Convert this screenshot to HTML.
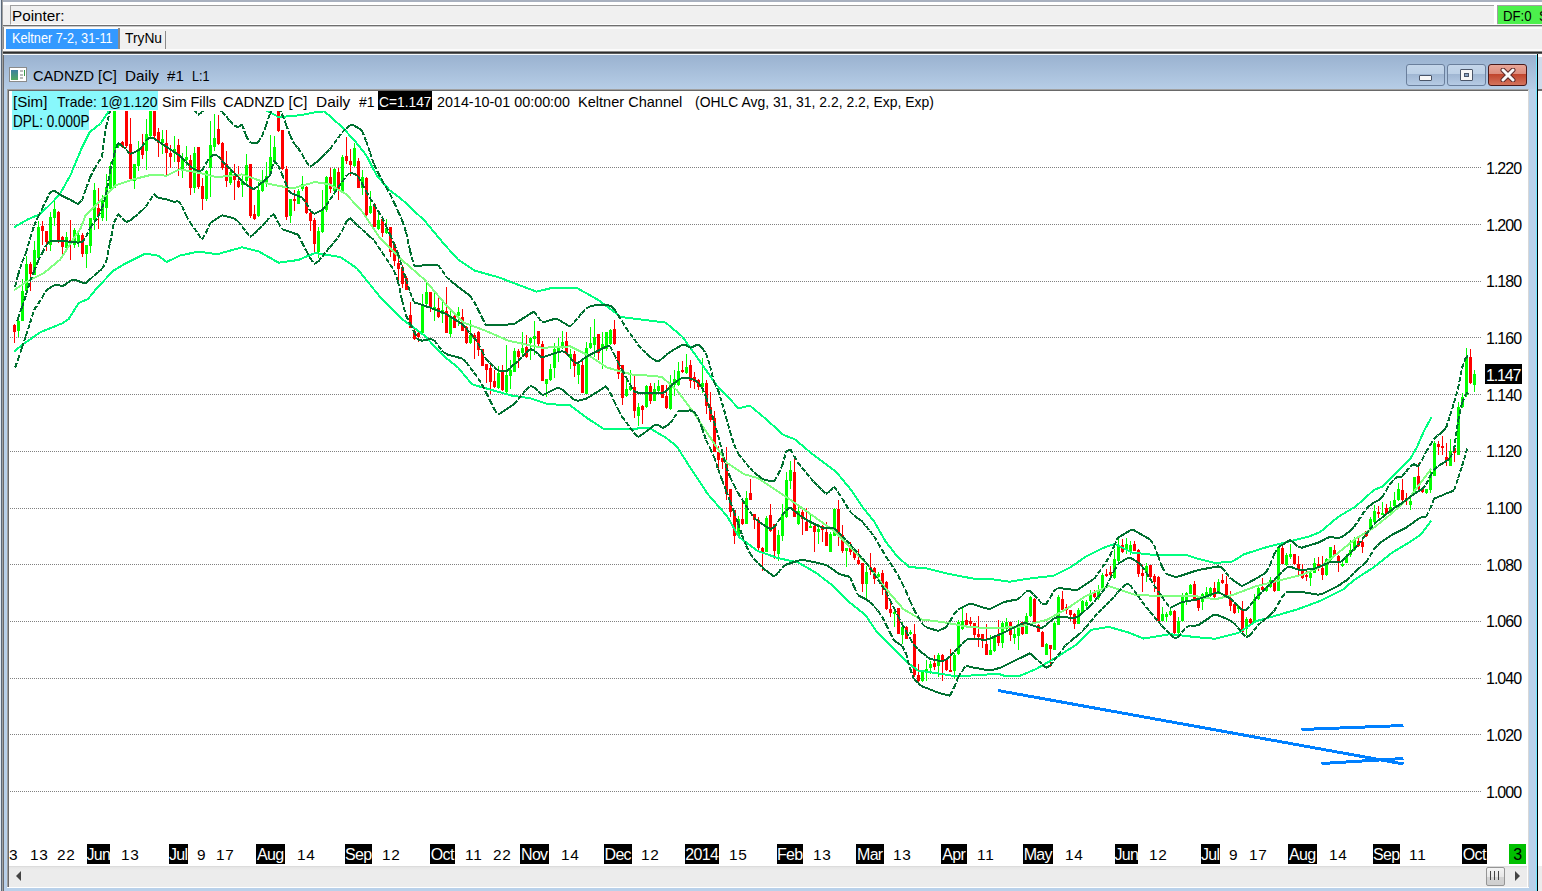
<!DOCTYPE html>
<html><head><meta charset="utf-8"><style>
*{box-sizing:border-box}
html,body{margin:0;padding:0}
body{width:1542px;height:891px;overflow:hidden;position:relative;background:#f0f0f0;font-family:"Liberation Sans",sans-serif;color:#000}
.a{position:absolute}
.t{position:absolute;white-space:pre;font-size:15px;line-height:19px;transform-origin:0 50%}
.pl{position:absolute;left:1486px;width:40px;height:19px;line-height:19px;font-size:16px;letter-spacing:-1px;white-space:pre}
.db{position:absolute;top:844px;height:20px;background:#000;color:#fff;font-size:16px;line-height:21px;text-align:center;white-space:pre;letter-spacing:-0.7px;text-indent:-0.5px}
.dn{position:absolute;top:844px;height:20px;font-size:15.4px;line-height:22px;white-space:pre;letter-spacing:0.8px}
</style></head><body>
<div class="a" style="left:0;top:0;width:1542px;height:2px;background:#a9b1bf"></div>
<div class="a" style="left:0;top:2px;width:1542px;height:3px;background:#fff"></div>
<div class="a" style="left:1px;top:0;width:1px;height:891px;background:#5a6878"></div><div class="a" style="left:2px;top:0;width:1px;height:891px;background:#a0a0a0"></div>
<div class="a" style="left:0;top:0;width:1px;height:891px;background:#dfe8f2"></div>
<div class="a" style="left:10px;top:5px;width:1484px;height:20px;background:#f0f0f0;border-top:1px solid #a0a0a0;border-left:1px solid #a0a0a0;border-bottom:1px solid #fff"></div>
<div class="t" style="left:12px;top:6px;font-size:15.5px;transform:scaleX(0.985)">Pointer:</div>
<div class="a" style="left:1494px;top:5px;width:3px;height:20px;background:#fff"></div>
<div class="a" style="left:1497px;top:5px;width:45px;height:19px;background:#4cf04c;border-top:1px solid #a0a0a0;border-left:1px solid #a0a0a0"></div>
<div class="t" style="left:1503px;top:6px;transform:scaleX(0.88)">DF:0  S</div>
<div class="a" style="left:3px;top:25px;width:1539px;height:1px;background:#6e6e6e"></div>
<div class="a" style="left:3px;top:26px;width:1539px;height:1px;background:#c8c8c8"></div>
<div class="a" style="left:3px;top:27px;width:1px;height:24px;background:#8a8a8a"></div>
<div class="a" style="left:4px;top:27px;width:1538px;height:2px;background:#fbfbfb"></div>
<div class="a" style="left:4px;top:27px;width:2px;height:23px;background:#fbfbfb"></div>
<div class="a" style="left:6px;top:29px;width:112px;height:20px;background:#3399ff"></div>
<div class="t" style="left:12px;top:29px;color:#fff;font-size:14.5px;transform:scaleX(0.875)">Keltner 7-2, 31-11</div>
<div class="a" style="left:118px;top:28px;width:2px;height:21px;background:#8a8a8a"></div>
<div class="t" style="left:125px;top:29px;font-size:14.5px;transform:scaleX(0.95)">TryNu</div>
<div class="a" style="left:165px;top:31px;width:1px;height:18px;background:#8a8a8a"></div>
<div class="a" style="left:3px;top:49px;width:1539px;height:2px;background:#fbfbfb"></div>
<div class="a" style="left:3px;top:51px;width:1539px;height:1px;background:#8a8a8a"></div>
<div class="a" style="left:3px;top:52px;width:1539px;height:1px;background:#2e2e2e"></div>
<div class="a" style="left:3px;top:53px;width:1539px;height:1px;background:#5a5a5a"></div>
<div class="a" style="left:3px;top:54px;width:1535px;height:1px;background:#f4f8fc"></div>
<!-- right other window -->
<div class="a" style="left:1538px;top:54px;width:4px;height:837px;background:#fff"></div><div class="a" style="left:1538px;top:57px;width:4px;height:32px;background:#cfdceb"></div><div class="a" style="left:1538px;top:89px;width:4px;height:2px;background:#6a6a6a"></div><div class="a" style="left:1538px;top:866px;width:4px;height:25px;background:#ececec"></div>
<div class="a" style="left:1537px;top:54px;width:1px;height:837px;background:#000"></div>
<!-- MDI window -->
<div class="a" style="left:3px;top:55px;width:1534px;height:836px;background:#b9d1ea;border-left:1px solid #6a6a6a"></div>
<div class="a" style="left:4px;top:55px;width:1532px;height:34px;background:linear-gradient(#9ab2d0,#b6cde6)"></div>
<div class="a" style="left:1536px;top:55px;width:1px;height:836px;background:#6ee8ff"></div>
<!-- icon -->
<div class="a" style="left:9px;top:67px;width:18px;height:15px;background:#fff;border:1px solid #8a8a8a"></div>
<div class="a" style="left:11px;top:70px;width:7px;height:10px;background:linear-gradient(#3b7fa0,#4fa860)"></div>
<div class="a" style="left:20px;top:70px;width:3px;height:2px;background:#bbb"></div>
<div class="a" style="left:20px;top:74px;width:3px;height:2px;background:#bbb"></div>
<div class="a" style="left:20px;top:77px;width:3px;height:2px;background:#bbb"></div>
<div class="a" style="left:24px;top:70px;width:1px;height:6px;background:#3a9a4a"></div>
<div class="t" style="left:32.5px;top:65.5px;transform:scaleX(0.976)">CADNZD [C]</div><div class="t" style="left:125.0px;top:65.5px;transform:scaleX(1.019)">Daily</div><div class="t" style="left:167.2px;top:65.5px;transform:scaleX(1.006)">#1</div><div class="t" style="left:192.3px;top:65.5px;transform:scaleX(0.842)">L:1</div>
<!-- title buttons -->
<div class="a" style="left:1406px;top:64px;width:39px;height:22px;border:1px solid #6a7f9c;border-radius:3px;background:linear-gradient(#c4d6ea 0%,#bcd0e6 45%,#9fb6d2 46%,#b6cbe4 100%)"></div>
<div class="a" style="left:1419px;top:75px;width:13px;height:6px;background:#f8f8f8;border:1px solid #4a5568;border-radius:1px"></div>
<div class="a" style="left:1447px;top:64px;width:39px;height:22px;border:1px solid #6a7f9c;border-radius:3px;background:linear-gradient(#c4d6ea 0%,#bcd0e6 45%,#9fb6d2 46%,#b6cbe4 100%)"></div>
<div class="a" style="left:1460px;top:69px;width:13px;height:12px;background:#f8f8f8;border:1px solid #4a5568;border-radius:1px"></div>
<div class="a" style="left:1464px;top:73px;width:5px;height:4px;background:#8aa4c4;border:1px solid #4a5568"></div>
<div class="a" style="left:1488px;top:64px;width:39px;height:22px;border:1px solid #4a1a1a;border-radius:3px;background:linear-gradient(#e8a698 0%,#dc8c7c 45%,#c0442c 46%,#d4745c 100%)"></div>
<svg class="a" style="left:1500px;top:68px" width="16" height="14"><path d="M3 2 L13 12 M13 2 L3 12" stroke="#5a2a2a" stroke-width="5" stroke-linecap="round"/><path d="M3 2 L13 12 M13 2 L3 12" stroke="#fafafa" stroke-width="3" stroke-linecap="round"/></svg>
<!-- client -->
<div class="a" style="left:7px;top:89px;width:1522px;height:798px;background:#fff;border-top:1px solid #a0a0a0;border-left:1px solid #a0a0a0;border-right:1px solid #d8d8d8"></div><div class="a" style="left:8px;top:90px;width:1px;height:797px;background:#696969"></div><div class="a" style="left:8px;top:90px;width:1520px;height:1px;background:#696969"></div>
<div class="a" style="left:7px;top:887px;width:1522px;height:1px;background:#fff"></div>
<svg width="1542" height="891" style="position:absolute;left:0;top:0">
<defs><clipPath id="pc"><rect x="9" y="111" width="1470" height="733"/></clipPath></defs>
<line x1="10" y1="167.5" x2="1482" y2="167.5" stroke="#808080" stroke-width="1" stroke-dasharray="1 1" shape-rendering="crispEdges"/>
<line x1="10" y1="224.5" x2="1482" y2="224.5" stroke="#808080" stroke-width="1" stroke-dasharray="1 1" shape-rendering="crispEdges"/>
<line x1="10" y1="281.5" x2="1482" y2="281.5" stroke="#808080" stroke-width="1" stroke-dasharray="1 1" shape-rendering="crispEdges"/>
<line x1="10" y1="337.5" x2="1482" y2="337.5" stroke="#808080" stroke-width="1" stroke-dasharray="1 1" shape-rendering="crispEdges"/>
<line x1="10" y1="394.5" x2="1482" y2="394.5" stroke="#808080" stroke-width="1" stroke-dasharray="1 1" shape-rendering="crispEdges"/>
<line x1="10" y1="451.5" x2="1482" y2="451.5" stroke="#808080" stroke-width="1" stroke-dasharray="1 1" shape-rendering="crispEdges"/>
<line x1="10" y1="508.5" x2="1482" y2="508.5" stroke="#808080" stroke-width="1" stroke-dasharray="1 1" shape-rendering="crispEdges"/>
<line x1="10" y1="564.5" x2="1482" y2="564.5" stroke="#808080" stroke-width="1" stroke-dasharray="1 1" shape-rendering="crispEdges"/>
<line x1="10" y1="621.5" x2="1482" y2="621.5" stroke="#808080" stroke-width="1" stroke-dasharray="1 1" shape-rendering="crispEdges"/>
<line x1="10" y1="678.5" x2="1482" y2="678.5" stroke="#808080" stroke-width="1" stroke-dasharray="1 1" shape-rendering="crispEdges"/>
<line x1="10" y1="734.5" x2="1482" y2="734.5" stroke="#808080" stroke-width="1" stroke-dasharray="1 1" shape-rendering="crispEdges"/>
<line x1="10" y1="791.5" x2="1482" y2="791.5" stroke="#808080" stroke-width="1" stroke-dasharray="1 1" shape-rendering="crispEdges"/>
<g clip-path="url(#pc)">
<rect x="14" y="324" width="1" height="19" fill="#ff0000"/>
<rect x="13" y="325" width="3" height="7" fill="#ff0000"/>
<rect x="18" y="320" width="1" height="17" fill="#00ff00"/>
<rect x="17" y="321" width="3" height="10" fill="#00ff00"/>
<rect x="22" y="279" width="1" height="42" fill="#00ff00"/>
<rect x="21" y="291" width="3" height="30" fill="#00ff00"/>
<rect x="26" y="256" width="1" height="37" fill="#00ff00"/>
<rect x="25" y="264" width="3" height="27" fill="#00ff00"/>
<rect x="30" y="262" width="1" height="29" fill="#ff0000"/>
<rect x="29" y="264" width="3" height="10" fill="#ff0000"/>
<rect x="34" y="241" width="1" height="34" fill="#00ff00"/>
<rect x="33" y="250" width="3" height="25" fill="#00ff00"/>
<rect x="38" y="221" width="1" height="37" fill="#00ff00"/>
<rect x="37" y="227" width="3" height="31" fill="#00ff00"/>
<rect x="42" y="221" width="1" height="24" fill="#ff0000"/>
<rect x="41" y="226" width="3" height="5" fill="#ff0000"/>
<rect x="46" y="231" width="1" height="20" fill="#ff0000"/>
<rect x="45" y="231" width="3" height="11" fill="#ff0000"/>
<rect x="50" y="212" width="1" height="39" fill="#00ff00"/>
<rect x="49" y="217" width="3" height="28" fill="#00ff00"/>
<rect x="54" y="199" width="1" height="27" fill="#00ff00"/>
<rect x="53" y="209" width="3" height="9" fill="#00ff00"/>
<rect x="58" y="211" width="1" height="32" fill="#ff0000"/>
<rect x="57" y="212" width="3" height="29" fill="#ff0000"/>
<rect x="62" y="236" width="1" height="19" fill="#ff0000"/>
<rect x="61" y="237" width="3" height="10" fill="#ff0000"/>
<rect x="66" y="232" width="1" height="17" fill="#00ff00"/>
<rect x="65" y="237" width="3" height="11" fill="#00ff00"/>
<rect x="70" y="220" width="1" height="40" fill="#ff0000"/>
<rect x="69" y="240" width="3" height="2" fill="#ff0000"/>
<rect x="74" y="228" width="1" height="20" fill="#00ff00"/>
<rect x="73" y="230" width="3" height="15" fill="#00ff00"/>
<rect x="78" y="233" width="1" height="14" fill="#00ff00"/>
<rect x="77" y="235" width="3" height="8" fill="#00ff00"/>
<rect x="82" y="233" width="1" height="24" fill="#ff0000"/>
<rect x="81" y="235" width="3" height="19" fill="#ff0000"/>
<rect x="86" y="245" width="1" height="23" fill="#00ff00"/>
<rect x="85" y="245" width="3" height="9" fill="#00ff00"/>
<rect x="90" y="218" width="1" height="35" fill="#00ff00"/>
<rect x="89" y="218" width="3" height="28" fill="#00ff00"/>
<rect x="94" y="183" width="1" height="47" fill="#00ff00"/>
<rect x="93" y="190" width="3" height="30" fill="#00ff00"/>
<rect x="98" y="188" width="1" height="41" fill="#ff0000"/>
<rect x="97" y="208" width="3" height="8" fill="#ff0000"/>
<rect x="102" y="195" width="1" height="26" fill="#00ff00"/>
<rect x="101" y="200" width="3" height="18" fill="#00ff00"/>
<rect x="106" y="174" width="1" height="47" fill="#00ff00"/>
<rect x="105" y="187" width="3" height="21" fill="#00ff00"/>
<rect x="110" y="162" width="1" height="27" fill="#00ff00"/>
<rect x="109" y="166" width="3" height="23" fill="#00ff00"/>
<rect x="114" y="111" width="1" height="77" fill="#00ff00"/>
<rect x="113" y="111" width="3" height="77" fill="#00ff00"/>
<rect x="118" y="142" width="1" height="6" fill="#00ff00"/>
<rect x="117" y="143" width="3" height="3" fill="#00ff00"/>
<rect x="122" y="141" width="1" height="7" fill="#ff0000"/>
<rect x="121" y="142" width="3" height="4" fill="#ff0000"/>
<rect x="126" y="111" width="1" height="37" fill="#ff0000"/>
<rect x="125" y="111" width="3" height="35" fill="#ff0000"/>
<rect x="130" y="118" width="1" height="61" fill="#ff0000"/>
<rect x="129" y="144" width="3" height="35" fill="#ff0000"/>
<rect x="134" y="164" width="1" height="25" fill="#00ff00"/>
<rect x="133" y="164" width="3" height="17" fill="#00ff00"/>
<rect x="138" y="141" width="1" height="30" fill="#00ff00"/>
<rect x="137" y="149" width="3" height="17" fill="#00ff00"/>
<rect x="142" y="134" width="1" height="25" fill="#ff0000"/>
<rect x="141" y="146" width="3" height="9" fill="#ff0000"/>
<rect x="146" y="119" width="1" height="51" fill="#00ff00"/>
<rect x="145" y="134" width="3" height="17" fill="#00ff00"/>
<rect x="150" y="111" width="1" height="26" fill="#00ff00"/>
<rect x="149" y="111" width="3" height="25" fill="#00ff00"/>
<rect x="154" y="111" width="1" height="28" fill="#ff0000"/>
<rect x="153" y="111" width="3" height="25" fill="#ff0000"/>
<rect x="158" y="128" width="1" height="29" fill="#ff0000"/>
<rect x="157" y="132" width="3" height="11" fill="#ff0000"/>
<rect x="162" y="130" width="1" height="24" fill="#00ff00"/>
<rect x="161" y="139" width="3" height="4" fill="#00ff00"/>
<rect x="166" y="130" width="1" height="46" fill="#ff0000"/>
<rect x="165" y="143" width="3" height="10" fill="#ff0000"/>
<rect x="170" y="145" width="1" height="23" fill="#ff0000"/>
<rect x="169" y="153" width="3" height="4" fill="#ff0000"/>
<rect x="174" y="136" width="1" height="26" fill="#00ff00"/>
<rect x="173" y="149" width="3" height="4" fill="#00ff00"/>
<rect x="178" y="139" width="1" height="37" fill="#ff0000"/>
<rect x="177" y="145" width="3" height="17" fill="#ff0000"/>
<rect x="182" y="153" width="1" height="25" fill="#00ff00"/>
<rect x="181" y="158" width="3" height="12" fill="#00ff00"/>
<rect x="186" y="146" width="1" height="20" fill="#00ff00"/>
<rect x="185" y="157" width="3" height="3" fill="#00ff00"/>
<rect x="190" y="155" width="1" height="40" fill="#ff0000"/>
<rect x="189" y="160" width="3" height="28" fill="#ff0000"/>
<rect x="194" y="147" width="1" height="46" fill="#00ff00"/>
<rect x="193" y="153" width="3" height="35" fill="#00ff00"/>
<rect x="198" y="147" width="1" height="42" fill="#ff0000"/>
<rect x="197" y="147" width="3" height="40" fill="#ff0000"/>
<rect x="202" y="178" width="1" height="32" fill="#ff0000"/>
<rect x="201" y="186" width="3" height="13" fill="#ff0000"/>
<rect x="206" y="170" width="1" height="31" fill="#00ff00"/>
<rect x="205" y="171" width="3" height="28" fill="#00ff00"/>
<rect x="210" y="121" width="1" height="76" fill="#00ff00"/>
<rect x="209" y="145" width="3" height="23" fill="#00ff00"/>
<rect x="214" y="114" width="1" height="37" fill="#00ff00"/>
<rect x="213" y="138" width="3" height="9" fill="#00ff00"/>
<rect x="218" y="115" width="1" height="30" fill="#ff0000"/>
<rect x="217" y="129" width="3" height="15" fill="#ff0000"/>
<rect x="222" y="142" width="1" height="28" fill="#ff0000"/>
<rect x="221" y="143" width="3" height="25" fill="#ff0000"/>
<rect x="226" y="151" width="1" height="36" fill="#ff0000"/>
<rect x="225" y="164" width="3" height="17" fill="#ff0000"/>
<rect x="230" y="168" width="1" height="17" fill="#00ff00"/>
<rect x="229" y="172" width="3" height="11" fill="#00ff00"/>
<rect x="234" y="164" width="1" height="36" fill="#ff0000"/>
<rect x="233" y="174" width="3" height="6" fill="#ff0000"/>
<rect x="238" y="166" width="1" height="22" fill="#ff0000"/>
<rect x="237" y="181" width="3" height="6" fill="#ff0000"/>
<rect x="242" y="176" width="1" height="21" fill="#00ff00"/>
<rect x="241" y="181" width="3" height="4" fill="#00ff00"/>
<rect x="246" y="154" width="1" height="31" fill="#00ff00"/>
<rect x="245" y="165" width="3" height="16" fill="#00ff00"/>
<rect x="250" y="164" width="1" height="54" fill="#ff0000"/>
<rect x="249" y="164" width="3" height="52" fill="#ff0000"/>
<rect x="254" y="205" width="1" height="15" fill="#ff0000"/>
<rect x="253" y="214" width="3" height="5" fill="#ff0000"/>
<rect x="258" y="182" width="1" height="35" fill="#00ff00"/>
<rect x="257" y="190" width="3" height="26" fill="#00ff00"/>
<rect x="262" y="170" width="1" height="22" fill="#00ff00"/>
<rect x="261" y="181" width="3" height="10" fill="#00ff00"/>
<rect x="266" y="162" width="1" height="25" fill="#00ff00"/>
<rect x="265" y="176" width="3" height="7" fill="#00ff00"/>
<rect x="270" y="135" width="1" height="39" fill="#00ff00"/>
<rect x="269" y="157" width="3" height="17" fill="#00ff00"/>
<rect x="274" y="136" width="1" height="28" fill="#00ff00"/>
<rect x="273" y="147" width="3" height="15" fill="#00ff00"/>
<rect x="278" y="111" width="1" height="21" fill="#ff0000"/>
<rect x="277" y="111" width="3" height="20" fill="#ff0000"/>
<rect x="282" y="130" width="1" height="40" fill="#ff0000"/>
<rect x="281" y="130" width="3" height="39" fill="#ff0000"/>
<rect x="286" y="166" width="1" height="54" fill="#ff0000"/>
<rect x="285" y="169" width="3" height="48" fill="#ff0000"/>
<rect x="290" y="199" width="1" height="24" fill="#00ff00"/>
<rect x="289" y="199" width="3" height="17" fill="#00ff00"/>
<rect x="294" y="190" width="1" height="21" fill="#ff0000"/>
<rect x="293" y="199" width="3" height="2" fill="#ff0000"/>
<rect x="298" y="189" width="1" height="15" fill="#00ff00"/>
<rect x="297" y="191" width="3" height="13" fill="#00ff00"/>
<rect x="302" y="176" width="1" height="15" fill="#00ff00"/>
<rect x="301" y="184" width="3" height="5" fill="#00ff00"/>
<rect x="306" y="186" width="1" height="28" fill="#ff0000"/>
<rect x="305" y="187" width="3" height="26" fill="#ff0000"/>
<rect x="310" y="210" width="1" height="21" fill="#ff0000"/>
<rect x="309" y="213" width="3" height="8" fill="#ff0000"/>
<rect x="314" y="218" width="1" height="36" fill="#ff0000"/>
<rect x="313" y="220" width="3" height="24" fill="#ff0000"/>
<rect x="318" y="227" width="1" height="31" fill="#00ff00"/>
<rect x="317" y="231" width="3" height="21" fill="#00ff00"/>
<rect x="322" y="190" width="1" height="43" fill="#00ff00"/>
<rect x="321" y="210" width="3" height="22" fill="#00ff00"/>
<rect x="326" y="176" width="1" height="36" fill="#00ff00"/>
<rect x="325" y="177" width="3" height="33" fill="#00ff00"/>
<rect x="330" y="168" width="1" height="25" fill="#ff0000"/>
<rect x="329" y="177" width="3" height="12" fill="#ff0000"/>
<rect x="334" y="168" width="1" height="27" fill="#00ff00"/>
<rect x="333" y="169" width="3" height="22" fill="#00ff00"/>
<rect x="338" y="168" width="1" height="32" fill="#ff0000"/>
<rect x="337" y="172" width="3" height="17" fill="#ff0000"/>
<rect x="342" y="155" width="1" height="36" fill="#00ff00"/>
<rect x="341" y="157" width="3" height="34" fill="#00ff00"/>
<rect x="346" y="137" width="1" height="27" fill="#ff0000"/>
<rect x="345" y="156" width="3" height="5" fill="#ff0000"/>
<rect x="350" y="149" width="1" height="27" fill="#ff0000"/>
<rect x="349" y="161" width="3" height="4" fill="#ff0000"/>
<rect x="354" y="143" width="1" height="24" fill="#00ff00"/>
<rect x="353" y="148" width="3" height="18" fill="#00ff00"/>
<rect x="358" y="158" width="1" height="30" fill="#ff0000"/>
<rect x="357" y="161" width="3" height="27" fill="#ff0000"/>
<rect x="362" y="170" width="1" height="25" fill="#00ff00"/>
<rect x="361" y="177" width="3" height="11" fill="#00ff00"/>
<rect x="366" y="177" width="1" height="39" fill="#ff0000"/>
<rect x="365" y="178" width="3" height="37" fill="#ff0000"/>
<rect x="370" y="191" width="1" height="23" fill="#00ff00"/>
<rect x="369" y="206" width="3" height="7" fill="#00ff00"/>
<rect x="374" y="204" width="1" height="23" fill="#ff0000"/>
<rect x="373" y="204" width="3" height="23" fill="#ff0000"/>
<rect x="378" y="210" width="1" height="20" fill="#00ff00"/>
<rect x="377" y="220" width="3" height="9" fill="#00ff00"/>
<rect x="382" y="218" width="1" height="19" fill="#ff0000"/>
<rect x="381" y="219" width="3" height="14" fill="#ff0000"/>
<rect x="386" y="219" width="1" height="15" fill="#00ff00"/>
<rect x="385" y="228" width="3" height="5" fill="#00ff00"/>
<rect x="390" y="227" width="1" height="30" fill="#ff0000"/>
<rect x="389" y="227" width="3" height="25" fill="#ff0000"/>
<rect x="394" y="242" width="1" height="24" fill="#ff0000"/>
<rect x="393" y="244" width="3" height="17" fill="#ff0000"/>
<rect x="398" y="259" width="1" height="21" fill="#ff0000"/>
<rect x="397" y="263" width="3" height="6" fill="#ff0000"/>
<rect x="402" y="265" width="1" height="23" fill="#ff0000"/>
<rect x="401" y="267" width="3" height="17" fill="#ff0000"/>
<rect x="406" y="276" width="1" height="14" fill="#ff0000"/>
<rect x="405" y="278" width="3" height="12" fill="#ff0000"/>
<rect x="410" y="302" width="1" height="26" fill="#ff0000"/>
<rect x="409" y="315" width="3" height="13" fill="#ff0000"/>
<rect x="414" y="329" width="1" height="11" fill="#ff0000"/>
<rect x="413" y="331" width="3" height="8" fill="#ff0000"/>
<rect x="418" y="331" width="1" height="11" fill="#ff0000"/>
<rect x="417" y="333" width="3" height="4" fill="#ff0000"/>
<rect x="422" y="294" width="1" height="40" fill="#00ff00"/>
<rect x="421" y="306" width="3" height="27" fill="#00ff00"/>
<rect x="426" y="283" width="1" height="22" fill="#00ff00"/>
<rect x="425" y="292" width="3" height="12" fill="#00ff00"/>
<rect x="430" y="292" width="1" height="20" fill="#ff0000"/>
<rect x="429" y="292" width="3" height="15" fill="#ff0000"/>
<rect x="434" y="293" width="1" height="28" fill="#00ff00"/>
<rect x="433" y="307" width="3" height="2" fill="#00ff00"/>
<rect x="438" y="298" width="1" height="20" fill="#ff0000"/>
<rect x="437" y="308" width="3" height="9" fill="#ff0000"/>
<rect x="442" y="300" width="1" height="23" fill="#00ff00"/>
<rect x="441" y="310" width="3" height="4" fill="#00ff00"/>
<rect x="446" y="287" width="1" height="46" fill="#ff0000"/>
<rect x="445" y="311" width="3" height="22" fill="#ff0000"/>
<rect x="450" y="311" width="1" height="26" fill="#00ff00"/>
<rect x="449" y="316" width="3" height="18" fill="#00ff00"/>
<rect x="454" y="314" width="1" height="14" fill="#ff0000"/>
<rect x="453" y="316" width="3" height="12" fill="#ff0000"/>
<rect x="458" y="307" width="1" height="19" fill="#00ff00"/>
<rect x="457" y="312" width="3" height="4" fill="#00ff00"/>
<rect x="462" y="309" width="1" height="22" fill="#ff0000"/>
<rect x="461" y="317" width="3" height="14" fill="#ff0000"/>
<rect x="466" y="326" width="1" height="18" fill="#ff0000"/>
<rect x="465" y="327" width="3" height="16" fill="#ff0000"/>
<rect x="470" y="320" width="1" height="24" fill="#00ff00"/>
<rect x="469" y="335" width="3" height="8" fill="#00ff00"/>
<rect x="474" y="333" width="1" height="26" fill="#ff0000"/>
<rect x="473" y="335" width="3" height="4" fill="#ff0000"/>
<rect x="478" y="331" width="1" height="25" fill="#ff0000"/>
<rect x="477" y="332" width="3" height="18" fill="#ff0000"/>
<rect x="482" y="349" width="1" height="17" fill="#ff0000"/>
<rect x="481" y="349" width="3" height="17" fill="#ff0000"/>
<rect x="486" y="364" width="1" height="19" fill="#ff0000"/>
<rect x="485" y="364" width="3" height="6" fill="#ff0000"/>
<rect x="490" y="365" width="1" height="29" fill="#ff0000"/>
<rect x="489" y="368" width="3" height="14" fill="#ff0000"/>
<rect x="494" y="370" width="1" height="18" fill="#ff0000"/>
<rect x="493" y="381" width="3" height="6" fill="#ff0000"/>
<rect x="498" y="366" width="1" height="23" fill="#00ff00"/>
<rect x="497" y="373" width="3" height="15" fill="#00ff00"/>
<rect x="502" y="365" width="1" height="26" fill="#ff0000"/>
<rect x="501" y="372" width="3" height="18" fill="#ff0000"/>
<rect x="506" y="345" width="1" height="48" fill="#00ff00"/>
<rect x="505" y="375" width="3" height="17" fill="#00ff00"/>
<rect x="510" y="360" width="1" height="29" fill="#00ff00"/>
<rect x="509" y="370" width="3" height="6" fill="#00ff00"/>
<rect x="514" y="348" width="1" height="24" fill="#00ff00"/>
<rect x="513" y="351" width="3" height="21" fill="#00ff00"/>
<rect x="518" y="349" width="1" height="19" fill="#ff0000"/>
<rect x="517" y="351" width="3" height="6" fill="#ff0000"/>
<rect x="522" y="332" width="1" height="23" fill="#00ff00"/>
<rect x="521" y="348" width="3" height="5" fill="#00ff00"/>
<rect x="526" y="335" width="1" height="23" fill="#ff0000"/>
<rect x="525" y="347" width="3" height="10" fill="#ff0000"/>
<rect x="530" y="337" width="1" height="23" fill="#00ff00"/>
<rect x="529" y="338" width="3" height="5" fill="#00ff00"/>
<rect x="534" y="321" width="1" height="34" fill="#00ff00"/>
<rect x="533" y="336" width="3" height="3" fill="#00ff00"/>
<rect x="538" y="331" width="1" height="15" fill="#ff0000"/>
<rect x="537" y="331" width="3" height="13" fill="#ff0000"/>
<rect x="542" y="341" width="1" height="40" fill="#ff0000"/>
<rect x="541" y="344" width="3" height="37" fill="#ff0000"/>
<rect x="546" y="379" width="1" height="18" fill="#00ff00"/>
<rect x="545" y="379" width="3" height="5" fill="#00ff00"/>
<rect x="550" y="364" width="1" height="17" fill="#00ff00"/>
<rect x="549" y="369" width="3" height="11" fill="#00ff00"/>
<rect x="554" y="343" width="1" height="35" fill="#00ff00"/>
<rect x="553" y="349" width="3" height="19" fill="#00ff00"/>
<rect x="558" y="338" width="1" height="24" fill="#00ff00"/>
<rect x="557" y="348" width="3" height="4" fill="#00ff00"/>
<rect x="562" y="331" width="1" height="18" fill="#00ff00"/>
<rect x="561" y="342" width="3" height="5" fill="#00ff00"/>
<rect x="566" y="332" width="1" height="23" fill="#ff0000"/>
<rect x="565" y="341" width="3" height="13" fill="#ff0000"/>
<rect x="570" y="349" width="1" height="20" fill="#00ff00"/>
<rect x="569" y="354" width="3" height="4" fill="#00ff00"/>
<rect x="574" y="351" width="1" height="26" fill="#ff0000"/>
<rect x="573" y="354" width="3" height="12" fill="#ff0000"/>
<rect x="578" y="363" width="1" height="21" fill="#00ff00"/>
<rect x="577" y="364" width="3" height="11" fill="#00ff00"/>
<rect x="582" y="361" width="1" height="32" fill="#ff0000"/>
<rect x="581" y="365" width="3" height="28" fill="#ff0000"/>
<rect x="586" y="342" width="1" height="52" fill="#00ff00"/>
<rect x="585" y="348" width="3" height="46" fill="#00ff00"/>
<rect x="590" y="327" width="1" height="22" fill="#00ff00"/>
<rect x="589" y="343" width="3" height="5" fill="#00ff00"/>
<rect x="594" y="319" width="1" height="38" fill="#00ff00"/>
<rect x="593" y="337" width="3" height="8" fill="#00ff00"/>
<rect x="598" y="334" width="1" height="26" fill="#ff0000"/>
<rect x="597" y="334" width="3" height="19" fill="#ff0000"/>
<rect x="602" y="332" width="1" height="37" fill="#00ff00"/>
<rect x="601" y="344" width="3" height="5" fill="#00ff00"/>
<rect x="606" y="332" width="1" height="19" fill="#00ff00"/>
<rect x="605" y="332" width="3" height="17" fill="#00ff00"/>
<rect x="610" y="329" width="1" height="16" fill="#00ff00"/>
<rect x="609" y="330" width="3" height="14" fill="#00ff00"/>
<rect x="614" y="320" width="1" height="25" fill="#ff0000"/>
<rect x="613" y="329" width="3" height="15" fill="#ff0000"/>
<rect x="618" y="351" width="1" height="28" fill="#ff0000"/>
<rect x="617" y="351" width="3" height="23" fill="#ff0000"/>
<rect x="622" y="365" width="1" height="40" fill="#ff0000"/>
<rect x="621" y="365" width="3" height="33" fill="#ff0000"/>
<rect x="626" y="376" width="1" height="21" fill="#00ff00"/>
<rect x="625" y="389" width="3" height="7" fill="#00ff00"/>
<rect x="630" y="370" width="1" height="21" fill="#00ff00"/>
<rect x="629" y="386" width="3" height="4" fill="#00ff00"/>
<rect x="634" y="376" width="1" height="42" fill="#ff0000"/>
<rect x="633" y="387" width="3" height="24" fill="#ff0000"/>
<rect x="638" y="403" width="1" height="23" fill="#00ff00"/>
<rect x="637" y="407" width="3" height="9" fill="#00ff00"/>
<rect x="642" y="405" width="1" height="19" fill="#ff0000"/>
<rect x="641" y="406" width="3" height="4" fill="#ff0000"/>
<rect x="646" y="385" width="1" height="23" fill="#00ff00"/>
<rect x="645" y="386" width="3" height="21" fill="#00ff00"/>
<rect x="650" y="383" width="1" height="21" fill="#ff0000"/>
<rect x="649" y="386" width="3" height="15" fill="#ff0000"/>
<rect x="654" y="383" width="1" height="18" fill="#00ff00"/>
<rect x="653" y="389" width="3" height="12" fill="#00ff00"/>
<rect x="658" y="380" width="1" height="13" fill="#00ff00"/>
<rect x="657" y="386" width="3" height="5" fill="#00ff00"/>
<rect x="662" y="385" width="1" height="13" fill="#ff0000"/>
<rect x="661" y="385" width="3" height="13" fill="#ff0000"/>
<rect x="666" y="385" width="1" height="24" fill="#ff0000"/>
<rect x="665" y="396" width="3" height="12" fill="#ff0000"/>
<rect x="670" y="375" width="1" height="35" fill="#00ff00"/>
<rect x="669" y="383" width="3" height="26" fill="#00ff00"/>
<rect x="674" y="370" width="1" height="26" fill="#00ff00"/>
<rect x="673" y="379" width="3" height="6" fill="#00ff00"/>
<rect x="678" y="362" width="1" height="24" fill="#00ff00"/>
<rect x="677" y="371" width="3" height="14" fill="#00ff00"/>
<rect x="682" y="361" width="1" height="12" fill="#ff0000"/>
<rect x="681" y="370" width="3" height="2" fill="#ff0000"/>
<rect x="686" y="354" width="1" height="20" fill="#00ff00"/>
<rect x="685" y="367" width="3" height="6" fill="#00ff00"/>
<rect x="690" y="360" width="1" height="28" fill="#ff0000"/>
<rect x="689" y="365" width="3" height="16" fill="#ff0000"/>
<rect x="694" y="372" width="1" height="17" fill="#ff0000"/>
<rect x="693" y="377" width="3" height="5" fill="#ff0000"/>
<rect x="698" y="379" width="1" height="11" fill="#ff0000"/>
<rect x="697" y="380" width="3" height="7" fill="#ff0000"/>
<rect x="702" y="358" width="1" height="35" fill="#00ff00"/>
<rect x="701" y="383" width="3" height="4" fill="#00ff00"/>
<rect x="706" y="380" width="1" height="34" fill="#ff0000"/>
<rect x="705" y="383" width="3" height="23" fill="#ff0000"/>
<rect x="710" y="392" width="1" height="30" fill="#ff0000"/>
<rect x="709" y="407" width="3" height="13" fill="#ff0000"/>
<rect x="714" y="411" width="1" height="41" fill="#ff0000"/>
<rect x="713" y="418" width="3" height="34" fill="#ff0000"/>
<rect x="718" y="446" width="1" height="23" fill="#ff0000"/>
<rect x="717" y="452" width="3" height="8" fill="#ff0000"/>
<rect x="722" y="455" width="1" height="14" fill="#ff0000"/>
<rect x="721" y="458" width="3" height="4" fill="#ff0000"/>
<rect x="726" y="447" width="1" height="53" fill="#ff0000"/>
<rect x="725" y="463" width="3" height="31" fill="#ff0000"/>
<rect x="730" y="489" width="1" height="28" fill="#ff0000"/>
<rect x="729" y="489" width="3" height="23" fill="#ff0000"/>
<rect x="734" y="510" width="1" height="34" fill="#ff0000"/>
<rect x="733" y="510" width="3" height="26" fill="#ff0000"/>
<rect x="738" y="516" width="1" height="21" fill="#00ff00"/>
<rect x="737" y="519" width="3" height="17" fill="#00ff00"/>
<rect x="742" y="500" width="1" height="25" fill="#ff0000"/>
<rect x="741" y="519" width="3" height="5" fill="#ff0000"/>
<rect x="746" y="491" width="1" height="33" fill="#00ff00"/>
<rect x="745" y="498" width="3" height="26" fill="#00ff00"/>
<rect x="750" y="479" width="1" height="21" fill="#ff0000"/>
<rect x="749" y="493" width="3" height="7" fill="#ff0000"/>
<rect x="754" y="514" width="1" height="15" fill="#ff0000"/>
<rect x="753" y="514" width="3" height="6" fill="#ff0000"/>
<rect x="758" y="517" width="1" height="33" fill="#ff0000"/>
<rect x="757" y="520" width="3" height="28" fill="#ff0000"/>
<rect x="762" y="547" width="1" height="24" fill="#ff0000"/>
<rect x="761" y="548" width="3" height="4" fill="#ff0000"/>
<rect x="766" y="516" width="1" height="36" fill="#00ff00"/>
<rect x="765" y="518" width="3" height="34" fill="#00ff00"/>
<rect x="770" y="504" width="1" height="28" fill="#ff0000"/>
<rect x="769" y="515" width="3" height="16" fill="#ff0000"/>
<rect x="774" y="524" width="1" height="35" fill="#ff0000"/>
<rect x="773" y="524" width="3" height="27" fill="#ff0000"/>
<rect x="778" y="530" width="1" height="31" fill="#00ff00"/>
<rect x="777" y="535" width="3" height="19" fill="#00ff00"/>
<rect x="782" y="504" width="1" height="37" fill="#00ff00"/>
<rect x="781" y="514" width="3" height="22" fill="#00ff00"/>
<rect x="786" y="472" width="1" height="46" fill="#00ff00"/>
<rect x="785" y="480" width="3" height="37" fill="#00ff00"/>
<rect x="790" y="461" width="1" height="28" fill="#00ff00"/>
<rect x="789" y="470" width="3" height="11" fill="#00ff00"/>
<rect x="794" y="457" width="1" height="60" fill="#ff0000"/>
<rect x="793" y="472" width="3" height="45" fill="#ff0000"/>
<rect x="798" y="504" width="1" height="21" fill="#00ff00"/>
<rect x="797" y="511" width="3" height="13" fill="#00ff00"/>
<rect x="802" y="509" width="1" height="26" fill="#ff0000"/>
<rect x="801" y="512" width="3" height="7" fill="#ff0000"/>
<rect x="806" y="508" width="1" height="23" fill="#ff0000"/>
<rect x="805" y="522" width="3" height="9" fill="#ff0000"/>
<rect x="810" y="514" width="1" height="14" fill="#00ff00"/>
<rect x="809" y="526" width="3" height="2" fill="#00ff00"/>
<rect x="814" y="525" width="1" height="27" fill="#ff0000"/>
<rect x="813" y="526" width="3" height="6" fill="#ff0000"/>
<rect x="818" y="524" width="1" height="20" fill="#00ff00"/>
<rect x="817" y="529" width="3" height="3" fill="#00ff00"/>
<rect x="822" y="525" width="1" height="17" fill="#ff0000"/>
<rect x="821" y="526" width="3" height="4" fill="#ff0000"/>
<rect x="826" y="522" width="1" height="24" fill="#ff0000"/>
<rect x="825" y="532" width="3" height="14" fill="#ff0000"/>
<rect x="830" y="532" width="1" height="20" fill="#00ff00"/>
<rect x="829" y="534" width="3" height="18" fill="#00ff00"/>
<rect x="834" y="508" width="1" height="28" fill="#00ff00"/>
<rect x="833" y="509" width="3" height="27" fill="#00ff00"/>
<rect x="838" y="500" width="1" height="46" fill="#ff0000"/>
<rect x="837" y="509" width="3" height="24" fill="#ff0000"/>
<rect x="842" y="525" width="1" height="28" fill="#ff0000"/>
<rect x="841" y="535" width="3" height="16" fill="#ff0000"/>
<rect x="846" y="548" width="1" height="19" fill="#00ff00"/>
<rect x="845" y="548" width="3" height="3" fill="#00ff00"/>
<rect x="850" y="542" width="1" height="13" fill="#ff0000"/>
<rect x="849" y="546" width="3" height="6" fill="#ff0000"/>
<rect x="854" y="549" width="1" height="11" fill="#ff0000"/>
<rect x="853" y="552" width="3" height="6" fill="#ff0000"/>
<rect x="858" y="549" width="1" height="16" fill="#ff0000"/>
<rect x="857" y="560" width="3" height="4" fill="#ff0000"/>
<rect x="862" y="563" width="1" height="29" fill="#ff0000"/>
<rect x="861" y="563" width="3" height="21" fill="#ff0000"/>
<rect x="866" y="566" width="1" height="34" fill="#00ff00"/>
<rect x="865" y="572" width="3" height="12" fill="#00ff00"/>
<rect x="870" y="553" width="1" height="22" fill="#ff0000"/>
<rect x="869" y="567" width="3" height="3" fill="#ff0000"/>
<rect x="874" y="567" width="1" height="17" fill="#ff0000"/>
<rect x="873" y="568" width="3" height="11" fill="#ff0000"/>
<rect x="878" y="572" width="1" height="8" fill="#00ff00"/>
<rect x="877" y="574" width="3" height="3" fill="#00ff00"/>
<rect x="882" y="570" width="1" height="25" fill="#ff0000"/>
<rect x="881" y="573" width="3" height="14" fill="#ff0000"/>
<rect x="886" y="581" width="1" height="29" fill="#ff0000"/>
<rect x="885" y="582" width="3" height="27" fill="#ff0000"/>
<rect x="890" y="600" width="1" height="17" fill="#ff0000"/>
<rect x="889" y="609" width="3" height="4" fill="#ff0000"/>
<rect x="894" y="610" width="1" height="17" fill="#00ff00"/>
<rect x="893" y="612" width="3" height="2" fill="#00ff00"/>
<rect x="898" y="608" width="1" height="26" fill="#ff0000"/>
<rect x="897" y="608" width="3" height="26" fill="#ff0000"/>
<rect x="902" y="622" width="1" height="22" fill="#00ff00"/>
<rect x="901" y="627" width="3" height="8" fill="#00ff00"/>
<rect x="906" y="626" width="1" height="13" fill="#ff0000"/>
<rect x="905" y="627" width="3" height="12" fill="#ff0000"/>
<rect x="910" y="630" width="1" height="5" fill="#00ff00"/>
<rect x="909" y="632" width="3" height="2" fill="#00ff00"/>
<rect x="914" y="624" width="1" height="53" fill="#ff0000"/>
<rect x="913" y="634" width="3" height="41" fill="#ff0000"/>
<rect x="918" y="664" width="1" height="21" fill="#ff0000"/>
<rect x="917" y="675" width="3" height="6" fill="#ff0000"/>
<rect x="922" y="670" width="1" height="12" fill="#00ff00"/>
<rect x="921" y="671" width="3" height="10" fill="#00ff00"/>
<rect x="926" y="660" width="1" height="21" fill="#00ff00"/>
<rect x="925" y="669" width="3" height="3" fill="#00ff00"/>
<rect x="930" y="661" width="1" height="13" fill="#00ff00"/>
<rect x="929" y="664" width="3" height="4" fill="#00ff00"/>
<rect x="934" y="655" width="1" height="15" fill="#ff0000"/>
<rect x="933" y="663" width="3" height="4" fill="#ff0000"/>
<rect x="938" y="653" width="1" height="24" fill="#00ff00"/>
<rect x="937" y="655" width="3" height="11" fill="#00ff00"/>
<rect x="942" y="654" width="1" height="27" fill="#ff0000"/>
<rect x="941" y="655" width="3" height="7" fill="#ff0000"/>
<rect x="946" y="659" width="1" height="12" fill="#ff0000"/>
<rect x="945" y="660" width="3" height="10" fill="#ff0000"/>
<rect x="950" y="649" width="1" height="23" fill="#ff0000"/>
<rect x="949" y="670" width="3" height="2" fill="#ff0000"/>
<rect x="954" y="653" width="1" height="26" fill="#00ff00"/>
<rect x="953" y="655" width="3" height="16" fill="#00ff00"/>
<rect x="958" y="620" width="1" height="35" fill="#00ff00"/>
<rect x="957" y="622" width="3" height="32" fill="#00ff00"/>
<rect x="962" y="608" width="1" height="22" fill="#00ff00"/>
<rect x="961" y="621" width="3" height="8" fill="#00ff00"/>
<rect x="966" y="613" width="1" height="15" fill="#ff0000"/>
<rect x="965" y="620" width="3" height="5" fill="#ff0000"/>
<rect x="970" y="617" width="1" height="9" fill="#ff0000"/>
<rect x="969" y="621" width="3" height="3" fill="#ff0000"/>
<rect x="974" y="623" width="1" height="16" fill="#ff0000"/>
<rect x="973" y="623" width="3" height="12" fill="#ff0000"/>
<rect x="978" y="616" width="1" height="31" fill="#ff0000"/>
<rect x="977" y="634" width="3" height="3" fill="#ff0000"/>
<rect x="982" y="634" width="1" height="14" fill="#ff0000"/>
<rect x="981" y="634" width="3" height="7" fill="#ff0000"/>
<rect x="986" y="624" width="1" height="31" fill="#ff0000"/>
<rect x="985" y="644" width="3" height="11" fill="#ff0000"/>
<rect x="990" y="635" width="1" height="20" fill="#00ff00"/>
<rect x="989" y="650" width="3" height="5" fill="#00ff00"/>
<rect x="994" y="635" width="1" height="17" fill="#00ff00"/>
<rect x="993" y="637" width="3" height="14" fill="#00ff00"/>
<rect x="998" y="620" width="1" height="26" fill="#ff0000"/>
<rect x="997" y="635" width="3" height="8" fill="#ff0000"/>
<rect x="1002" y="621" width="1" height="27" fill="#00ff00"/>
<rect x="1001" y="623" width="3" height="20" fill="#00ff00"/>
<rect x="1006" y="618" width="1" height="12" fill="#00ff00"/>
<rect x="1005" y="622" width="3" height="7" fill="#00ff00"/>
<rect x="1010" y="622" width="1" height="19" fill="#ff0000"/>
<rect x="1009" y="622" width="3" height="13" fill="#ff0000"/>
<rect x="1014" y="628" width="1" height="16" fill="#00ff00"/>
<rect x="1013" y="634" width="3" height="4" fill="#00ff00"/>
<rect x="1018" y="620" width="1" height="30" fill="#00ff00"/>
<rect x="1017" y="624" width="3" height="12" fill="#00ff00"/>
<rect x="1022" y="622" width="1" height="13" fill="#ff0000"/>
<rect x="1021" y="622" width="3" height="12" fill="#ff0000"/>
<rect x="1026" y="613" width="1" height="21" fill="#00ff00"/>
<rect x="1025" y="616" width="3" height="18" fill="#00ff00"/>
<rect x="1030" y="596" width="1" height="21" fill="#00ff00"/>
<rect x="1029" y="597" width="3" height="19" fill="#00ff00"/>
<rect x="1034" y="598" width="1" height="25" fill="#ff0000"/>
<rect x="1033" y="599" width="3" height="24" fill="#ff0000"/>
<rect x="1038" y="624" width="1" height="8" fill="#ff0000"/>
<rect x="1037" y="625" width="3" height="7" fill="#ff0000"/>
<rect x="1042" y="631" width="1" height="16" fill="#ff0000"/>
<rect x="1041" y="632" width="3" height="15" fill="#ff0000"/>
<rect x="1046" y="643" width="1" height="12" fill="#00ff00"/>
<rect x="1045" y="644" width="3" height="11" fill="#00ff00"/>
<rect x="1050" y="645" width="1" height="22" fill="#ff0000"/>
<rect x="1049" y="645" width="3" height="4" fill="#ff0000"/>
<rect x="1054" y="621" width="1" height="29" fill="#00ff00"/>
<rect x="1053" y="623" width="3" height="27" fill="#00ff00"/>
<rect x="1058" y="595" width="1" height="30" fill="#00ff00"/>
<rect x="1057" y="597" width="3" height="28" fill="#00ff00"/>
<rect x="1062" y="591" width="1" height="20" fill="#ff0000"/>
<rect x="1061" y="599" width="3" height="11" fill="#ff0000"/>
<rect x="1066" y="604" width="1" height="10" fill="#ff0000"/>
<rect x="1065" y="607" width="3" height="3" fill="#ff0000"/>
<rect x="1070" y="610" width="1" height="11" fill="#ff0000"/>
<rect x="1069" y="610" width="3" height="5" fill="#ff0000"/>
<rect x="1074" y="613" width="1" height="16" fill="#ff0000"/>
<rect x="1073" y="614" width="3" height="10" fill="#ff0000"/>
<rect x="1078" y="608" width="1" height="16" fill="#00ff00"/>
<rect x="1077" y="610" width="3" height="14" fill="#00ff00"/>
<rect x="1082" y="600" width="1" height="14" fill="#00ff00"/>
<rect x="1081" y="601" width="3" height="11" fill="#00ff00"/>
<rect x="1086" y="600" width="1" height="8" fill="#00ff00"/>
<rect x="1085" y="602" width="3" height="4" fill="#00ff00"/>
<rect x="1090" y="590" width="1" height="12" fill="#00ff00"/>
<rect x="1089" y="593" width="3" height="8" fill="#00ff00"/>
<rect x="1094" y="590" width="1" height="8" fill="#ff0000"/>
<rect x="1093" y="593" width="3" height="4" fill="#ff0000"/>
<rect x="1098" y="585" width="1" height="15" fill="#00ff00"/>
<rect x="1097" y="591" width="3" height="7" fill="#00ff00"/>
<rect x="1102" y="573" width="1" height="16" fill="#00ff00"/>
<rect x="1101" y="575" width="3" height="13" fill="#00ff00"/>
<rect x="1106" y="569" width="1" height="8" fill="#ff0000"/>
<rect x="1105" y="574" width="3" height="2" fill="#ff0000"/>
<rect x="1110" y="566" width="1" height="11" fill="#ff0000"/>
<rect x="1109" y="572" width="3" height="3" fill="#ff0000"/>
<rect x="1114" y="549" width="1" height="30" fill="#00ff00"/>
<rect x="1113" y="559" width="3" height="19" fill="#00ff00"/>
<rect x="1118" y="539" width="1" height="23" fill="#00ff00"/>
<rect x="1117" y="545" width="3" height="16" fill="#00ff00"/>
<rect x="1122" y="539" width="1" height="14" fill="#ff0000"/>
<rect x="1121" y="545" width="3" height="7" fill="#ff0000"/>
<rect x="1126" y="538" width="1" height="16" fill="#00ff00"/>
<rect x="1125" y="544" width="3" height="5" fill="#00ff00"/>
<rect x="1130" y="541" width="1" height="14" fill="#00ff00"/>
<rect x="1129" y="545" width="3" height="6" fill="#00ff00"/>
<rect x="1134" y="541" width="1" height="10" fill="#ff0000"/>
<rect x="1133" y="544" width="3" height="7" fill="#ff0000"/>
<rect x="1138" y="549" width="1" height="28" fill="#ff0000"/>
<rect x="1137" y="550" width="3" height="24" fill="#ff0000"/>
<rect x="1142" y="565" width="1" height="27" fill="#ff0000"/>
<rect x="1141" y="573" width="3" height="3" fill="#ff0000"/>
<rect x="1146" y="563" width="1" height="19" fill="#00ff00"/>
<rect x="1145" y="566" width="3" height="7" fill="#00ff00"/>
<rect x="1150" y="565" width="1" height="13" fill="#ff0000"/>
<rect x="1149" y="565" width="3" height="12" fill="#ff0000"/>
<rect x="1154" y="574" width="1" height="18" fill="#ff0000"/>
<rect x="1153" y="576" width="3" height="6" fill="#ff0000"/>
<rect x="1158" y="576" width="1" height="45" fill="#ff0000"/>
<rect x="1157" y="577" width="3" height="44" fill="#ff0000"/>
<rect x="1162" y="607" width="1" height="14" fill="#00ff00"/>
<rect x="1161" y="614" width="3" height="7" fill="#00ff00"/>
<rect x="1166" y="612" width="1" height="10" fill="#00ff00"/>
<rect x="1165" y="614" width="3" height="3" fill="#00ff00"/>
<rect x="1170" y="609" width="1" height="7" fill="#00ff00"/>
<rect x="1169" y="611" width="3" height="4" fill="#00ff00"/>
<rect x="1174" y="610" width="1" height="25" fill="#ff0000"/>
<rect x="1173" y="611" width="3" height="22" fill="#ff0000"/>
<rect x="1178" y="617" width="1" height="18" fill="#00ff00"/>
<rect x="1177" y="621" width="3" height="12" fill="#00ff00"/>
<rect x="1182" y="593" width="1" height="29" fill="#00ff00"/>
<rect x="1181" y="596" width="3" height="25" fill="#00ff00"/>
<rect x="1186" y="592" width="1" height="13" fill="#00ff00"/>
<rect x="1185" y="593" width="3" height="7" fill="#00ff00"/>
<rect x="1190" y="584" width="1" height="10" fill="#00ff00"/>
<rect x="1189" y="585" width="3" height="9" fill="#00ff00"/>
<rect x="1194" y="581" width="1" height="19" fill="#ff0000"/>
<rect x="1193" y="584" width="3" height="16" fill="#ff0000"/>
<rect x="1198" y="599" width="1" height="12" fill="#ff0000"/>
<rect x="1197" y="600" width="3" height="8" fill="#ff0000"/>
<rect x="1202" y="593" width="1" height="17" fill="#00ff00"/>
<rect x="1201" y="594" width="3" height="8" fill="#00ff00"/>
<rect x="1206" y="587" width="1" height="11" fill="#00ff00"/>
<rect x="1205" y="592" width="3" height="6" fill="#00ff00"/>
<rect x="1210" y="587" width="1" height="10" fill="#00ff00"/>
<rect x="1209" y="588" width="3" height="8" fill="#00ff00"/>
<rect x="1214" y="582" width="1" height="16" fill="#ff0000"/>
<rect x="1213" y="588" width="3" height="9" fill="#ff0000"/>
<rect x="1218" y="579" width="1" height="15" fill="#00ff00"/>
<rect x="1217" y="582" width="3" height="12" fill="#00ff00"/>
<rect x="1222" y="574" width="1" height="10" fill="#ff0000"/>
<rect x="1221" y="580" width="3" height="3" fill="#ff0000"/>
<rect x="1226" y="576" width="1" height="22" fill="#ff0000"/>
<rect x="1225" y="584" width="3" height="13" fill="#ff0000"/>
<rect x="1230" y="591" width="1" height="20" fill="#ff0000"/>
<rect x="1229" y="599" width="3" height="7" fill="#ff0000"/>
<rect x="1234" y="603" width="1" height="11" fill="#ff0000"/>
<rect x="1233" y="604" width="3" height="9" fill="#ff0000"/>
<rect x="1238" y="605" width="1" height="8" fill="#00ff00"/>
<rect x="1237" y="606" width="3" height="3" fill="#00ff00"/>
<rect x="1242" y="601" width="1" height="31" fill="#ff0000"/>
<rect x="1241" y="610" width="3" height="22" fill="#ff0000"/>
<rect x="1246" y="617" width="1" height="18" fill="#00ff00"/>
<rect x="1245" y="619" width="3" height="10" fill="#00ff00"/>
<rect x="1250" y="618" width="1" height="7" fill="#ff0000"/>
<rect x="1249" y="619" width="3" height="4" fill="#ff0000"/>
<rect x="1254" y="594" width="1" height="29" fill="#00ff00"/>
<rect x="1253" y="599" width="3" height="23" fill="#00ff00"/>
<rect x="1258" y="587" width="1" height="13" fill="#00ff00"/>
<rect x="1257" y="588" width="3" height="11" fill="#00ff00"/>
<rect x="1262" y="578" width="1" height="14" fill="#ff0000"/>
<rect x="1261" y="587" width="3" height="3" fill="#ff0000"/>
<rect x="1266" y="586" width="1" height="6" fill="#00ff00"/>
<rect x="1265" y="587" width="3" height="4" fill="#00ff00"/>
<rect x="1270" y="577" width="1" height="11" fill="#00ff00"/>
<rect x="1269" y="580" width="3" height="7" fill="#00ff00"/>
<rect x="1274" y="580" width="1" height="12" fill="#ff0000"/>
<rect x="1273" y="580" width="3" height="11" fill="#ff0000"/>
<rect x="1278" y="548" width="1" height="43" fill="#00ff00"/>
<rect x="1277" y="548" width="3" height="43" fill="#00ff00"/>
<rect x="1282" y="545" width="1" height="19" fill="#ff0000"/>
<rect x="1281" y="548" width="3" height="16" fill="#ff0000"/>
<rect x="1286" y="553" width="1" height="13" fill="#00ff00"/>
<rect x="1285" y="555" width="3" height="10" fill="#00ff00"/>
<rect x="1290" y="544" width="1" height="15" fill="#00ff00"/>
<rect x="1289" y="554" width="3" height="3" fill="#00ff00"/>
<rect x="1294" y="554" width="1" height="11" fill="#ff0000"/>
<rect x="1293" y="554" width="3" height="10" fill="#ff0000"/>
<rect x="1298" y="556" width="1" height="19" fill="#ff0000"/>
<rect x="1297" y="564" width="3" height="6" fill="#ff0000"/>
<rect x="1302" y="564" width="1" height="15" fill="#ff0000"/>
<rect x="1301" y="570" width="3" height="8" fill="#ff0000"/>
<rect x="1306" y="571" width="1" height="10" fill="#ff0000"/>
<rect x="1305" y="575" width="3" height="2" fill="#ff0000"/>
<rect x="1310" y="571" width="1" height="15" fill="#00ff00"/>
<rect x="1309" y="573" width="3" height="5" fill="#00ff00"/>
<rect x="1314" y="558" width="1" height="15" fill="#00ff00"/>
<rect x="1313" y="563" width="3" height="10" fill="#00ff00"/>
<rect x="1318" y="557" width="1" height="14" fill="#ff0000"/>
<rect x="1317" y="564" width="3" height="3" fill="#ff0000"/>
<rect x="1322" y="556" width="1" height="24" fill="#ff0000"/>
<rect x="1321" y="568" width="3" height="7" fill="#ff0000"/>
<rect x="1326" y="558" width="1" height="18" fill="#00ff00"/>
<rect x="1325" y="559" width="3" height="16" fill="#00ff00"/>
<rect x="1330" y="547" width="1" height="14" fill="#00ff00"/>
<rect x="1329" y="547" width="3" height="13" fill="#00ff00"/>
<rect x="1334" y="545" width="1" height="12" fill="#ff0000"/>
<rect x="1333" y="550" width="3" height="6" fill="#ff0000"/>
<rect x="1338" y="555" width="1" height="17" fill="#ff0000"/>
<rect x="1337" y="556" width="3" height="5" fill="#ff0000"/>
<rect x="1342" y="559" width="1" height="8" fill="#00ff00"/>
<rect x="1341" y="564" width="3" height="2" fill="#00ff00"/>
<rect x="1346" y="554" width="1" height="9" fill="#00ff00"/>
<rect x="1345" y="557" width="3" height="6" fill="#00ff00"/>
<rect x="1350" y="540" width="1" height="17" fill="#00ff00"/>
<rect x="1349" y="550" width="3" height="5" fill="#00ff00"/>
<rect x="1354" y="537" width="1" height="14" fill="#00ff00"/>
<rect x="1353" y="540" width="3" height="10" fill="#00ff00"/>
<rect x="1358" y="537" width="1" height="10" fill="#ff0000"/>
<rect x="1357" y="541" width="3" height="5" fill="#ff0000"/>
<rect x="1362" y="540" width="1" height="13" fill="#ff0000"/>
<rect x="1361" y="542" width="3" height="5" fill="#ff0000"/>
<rect x="1366" y="531" width="1" height="6" fill="#ff0000"/>
<rect x="1365" y="531" width="3" height="5" fill="#ff0000"/>
<rect x="1370" y="517" width="1" height="14" fill="#00ff00"/>
<rect x="1369" y="519" width="3" height="11" fill="#00ff00"/>
<rect x="1374" y="505" width="1" height="18" fill="#00ff00"/>
<rect x="1373" y="511" width="3" height="11" fill="#00ff00"/>
<rect x="1378" y="506" width="1" height="12" fill="#ff0000"/>
<rect x="1377" y="512" width="3" height="2" fill="#ff0000"/>
<rect x="1382" y="502" width="1" height="13" fill="#00ff00"/>
<rect x="1381" y="513" width="3" height="2" fill="#00ff00"/>
<rect x="1386" y="504" width="1" height="10" fill="#ff0000"/>
<rect x="1385" y="508" width="3" height="6" fill="#ff0000"/>
<rect x="1390" y="501" width="1" height="15" fill="#00ff00"/>
<rect x="1389" y="507" width="3" height="5" fill="#00ff00"/>
<rect x="1394" y="492" width="1" height="15" fill="#00ff00"/>
<rect x="1393" y="500" width="3" height="6" fill="#00ff00"/>
<rect x="1398" y="483" width="1" height="18" fill="#00ff00"/>
<rect x="1397" y="489" width="3" height="11" fill="#00ff00"/>
<rect x="1402" y="479" width="1" height="23" fill="#ff0000"/>
<rect x="1401" y="490" width="3" height="10" fill="#ff0000"/>
<rect x="1406" y="493" width="1" height="12" fill="#ff0000"/>
<rect x="1405" y="498" width="3" height="2" fill="#ff0000"/>
<rect x="1410" y="495" width="1" height="15" fill="#00ff00"/>
<rect x="1409" y="501" width="3" height="4" fill="#00ff00"/>
<rect x="1414" y="477" width="1" height="17" fill="#00ff00"/>
<rect x="1413" y="477" width="3" height="16" fill="#00ff00"/>
<rect x="1418" y="463" width="1" height="27" fill="#ff0000"/>
<rect x="1417" y="476" width="3" height="13" fill="#ff0000"/>
<rect x="1422" y="487" width="1" height="6" fill="#ff0000"/>
<rect x="1421" y="488" width="3" height="4" fill="#ff0000"/>
<rect x="1426" y="489" width="1" height="5" fill="#00ff00"/>
<rect x="1425" y="489" width="3" height="4" fill="#00ff00"/>
<rect x="1430" y="470" width="1" height="23" fill="#00ff00"/>
<rect x="1429" y="475" width="3" height="15" fill="#00ff00"/>
<rect x="1434" y="441" width="1" height="35" fill="#00ff00"/>
<rect x="1433" y="443" width="3" height="33" fill="#00ff00"/>
<rect x="1438" y="441" width="1" height="14" fill="#ff0000"/>
<rect x="1437" y="444" width="3" height="3" fill="#ff0000"/>
<rect x="1442" y="436" width="1" height="19" fill="#ff0000"/>
<rect x="1441" y="446" width="3" height="2" fill="#ff0000"/>
<rect x="1446" y="443" width="1" height="23" fill="#ff0000"/>
<rect x="1445" y="457" width="3" height="3" fill="#ff0000"/>
<rect x="1450" y="439" width="1" height="27" fill="#00ff00"/>
<rect x="1449" y="451" width="3" height="15" fill="#00ff00"/>
<rect x="1454" y="447" width="1" height="15" fill="#ff0000"/>
<rect x="1453" y="448" width="3" height="5" fill="#ff0000"/>
<rect x="1458" y="402" width="1" height="53" fill="#00ff00"/>
<rect x="1457" y="407" width="3" height="48" fill="#00ff00"/>
<rect x="1462" y="393" width="1" height="15" fill="#00ff00"/>
<rect x="1461" y="397" width="3" height="10" fill="#00ff00"/>
<rect x="1466" y="348" width="1" height="49" fill="#00ff00"/>
<rect x="1465" y="357" width="3" height="38" fill="#00ff00"/>
<rect x="1470" y="349" width="1" height="35" fill="#ff0000"/>
<rect x="1469" y="357" width="3" height="26" fill="#ff0000"/>
<rect x="1474" y="370" width="1" height="22" fill="#00ff00"/>
<rect x="1473" y="374" width="3" height="11" fill="#00ff00"/>
<polyline points="14.1,227.3 28.2,219.2 40.3,214.1 54.5,200.0 60.0,193.9 70.7,174.7 81.3,149.0 89.9,132.0 100.5,123.5 109.0,110.7 130.0,100.0 200.0,96.0 260.0,100.0 267.3,111.2 275.8,115.4 277.8,117.2 298.0,115.4 303.8,114.6 316.7,112.0 324.5,111.4 329.7,116.0 342.7,127.6 355.6,141.9 366.0,154.8 377.0,176.0 389.4,190.0 402.0,199.6 424.5,220.6 444.0,244.0 458.0,259.5 475.0,270.7 500.0,277.7 514.2,283.3 536.6,291.7 553.5,287.5 576.0,287.5 598.4,300.0 620.8,317.0 643.2,319.8 665.7,322.6 682.4,336.8 696.5,356.5 716.1,384.5 738.6,408.4 749.8,405.6 766.6,419.6 783.5,435.0 794.7,439.2 813.0,454.6 836.3,472.0 850.8,489.6 862.5,507.0 874.2,521.7 885.9,542.0 897.5,556.7 909.2,567.0 926.7,568.4 950.0,574.2 973.4,578.6 989.2,578.8 1009.6,581.7 1027.1,578.8 1053.3,575.8 1070.9,567.0 1085.4,556.9 1103.0,548.1 1114.6,543.8 1132.1,552.5 1158.4,555.4 1187.5,555.4 1197.5,558.6 1215.0,563.0 1232.5,561.5 1244.2,554.2 1267.5,546.9 1290.9,541.0 1308.4,536.7 1320.0,532.2 1338.0,517.0 1356.0,506.2 1373.9,490.0 1382.8,486.4 1395.4,473.9 1409.8,459.5 1417.0,447.0 1424.1,430.8 1431.6,417.0" fill="none" stroke="#00ff80" stroke-width="2" shape-rendering="crispEdges"/>
<polyline points="14.1,351.5 24.2,343.4 40.3,332.3 62.5,323.2 68.6,319.2 78.7,303.0 88.0,299.0 96.3,288.8 113.3,270.7 124.0,264.3 145.3,253.6 158.1,255.7 166.7,262.0 179.5,255.7 198.7,251.5 216.8,254.3 242.0,247.3 259.0,251.5 278.6,262.7 298.2,260.0 315.0,253.0 340.3,257.0 357.0,268.4 379.6,296.4 402.0,318.9 424.5,335.7 444.0,356.3 458.0,367.5 472.0,384.3 491.7,390.0 511.4,395.5 531.0,398.4 547.8,404.0 570.3,405.4 587.0,418.0 604.0,429.2 626.4,429.2 648.9,427.8 665.7,437.6 676.8,446.3 690.9,468.7 707.7,494.0 727.3,516.4 739.0,537.0 757.5,550.9 777.9,558.1 798.3,562.5 815.8,572.7 833.3,585.9 850.8,603.4 865.4,615.0 877.1,632.5 891.7,647.1 906.3,661.7 918.0,670.5 938.4,673.4 955.9,676.3 980.4,675.0 997.9,673.6 1005.0,676.0 1018.3,676.5 1035.8,669.2 1056.3,657.5 1076.7,644.4 1091.3,629.8 1108.8,626.9 1129.2,632.7 1143.8,638.6 1170.0,634.2 1197.5,637.3 1215.0,638.8 1238.3,633.0 1255.8,621.3 1276.3,615.5 1296.7,609.6 1320.0,601.0 1343.4,589.2 1354.1,580.0 1373.9,567.2 1391.8,552.9 1409.8,542.1 1420.6,534.9 1431.3,520.6" fill="none" stroke="#00ff80" stroke-width="2" shape-rendering="crispEdges"/>
<polyline points="14.1,290.0 28.2,280.8 44.4,272.7 60.3,259.5 72.7,240.0 80.8,228.0 85.6,215.2 102.7,198.0 115.5,185.3 134.7,179.0 151.7,174.7 166.7,175.7 179.5,169.3 200.0,173.0 216.8,177.2 242.0,174.4 270.0,184.2 292.6,188.4 315.0,182.0 329.0,184.2 346.0,194.0 362.7,212.2 379.6,237.5 402.0,260.0 424.5,279.6 446.8,305.8 463.7,322.6 486.0,331.0 508.6,340.8 542.2,347.8 570.3,346.4 590.0,356.3 606.8,367.5 632.0,374.5 654.5,376.0 662.0,377.0 676.8,390.1 693.7,412.6 710.5,437.8 727.3,463.1 744.2,474.3 757.5,477.9 775.0,489.6 792.5,501.3 812.9,515.8 833.3,530.4 850.8,548.0 868.4,565.4 885.9,588.8 903.4,609.2 920.9,619.4 944.2,622.3 967.5,626.7 989.2,628.4 1018.3,626.9 1047.5,619.6 1068.0,608.0 1085.4,596.3 1108.8,586.0 1135.0,594.8 1164.2,596.3 1197.5,596.5 1215.0,599.4 1232.5,595.0 1255.8,586.3 1279.2,580.4 1302.5,574.6 1320.0,567.2 1338.0,552.9 1356.0,538.5 1373.9,527.7 1391.8,513.4 1409.8,497.2 1431.3,468.5" fill="none" stroke="#80ff80" stroke-width="2" shape-rendering="crispEdges"/>
<path d="M15.1 286.9L16.3 282.0M16.8 280.1L18.0 275.3M18.0 275.2L19.5 270.4M20.1 268.5L21.6 263.7M22.0 262.3L24.0 257.7M24.8 255.8L26.0 253.0M26.0 253.0L27.3 248.1M27.9 246.2L29.2 241.4M29.7 239.5L30.0 238.4M30.0 238.4L31.5 233.7M32.2 231.8L33.7 227.0M34.0 226.1L36.0 221.6M36.8 219.7L38.0 216.9M38.0 216.9L40.2 212.4M41.1 210.6L42.0 208.8M42.0 208.8L44.2 204.3M45.1 202.5L46.0 200.8M46.0 200.8L48.2 196.3M49.1 194.5L50.0 192.5M50.0 192.5L54.0 190.5M54.0 190.5L58.0 193.2M58.0 193.2L62.0 195.8M62.0 195.8L66.0 197.7M66.0 197.7L70.0 199.6M70.0 199.6L74.0 201.9M74.0 201.9L78.0 204.2M78.0 204.2L81.6 200.8M82.0 200.5L83.6 195.7M84.2 193.8L85.8 189.1M86.0 188.5L87.8 183.8M88.5 182.0L90.0 177.8M90.0 177.8L92.1 173.3M93.0 171.5L94.0 169.3M94.0 169.3L96.7 165.1M97.7 163.4L98.0 163.0M98.0 163.0L100.7 158.7M101.7 157.0L102.0 156.6M102.0 156.6L102.7 151.7M102.9 149.7L103.6 144.7M103.9 142.7L104.6 137.8M104.8 135.8L105.5 130.9M105.8 128.9L106.0 127.3M106.0 127.3L107.2 122.4M107.6 120.5L108.8 115.6M109.3 113.7L110.0 110.7M110.0 110.7L114.0 108.6M114.0 108.6L118.0 106.4M118.0 106.4L122.0 104.3M122.0 104.3L126.0 102.1M126.0 102.1L130.0 100.0M130.0 100.0L134.0 100.0M134.0 100.0L138.0 100.0M138.0 100.0L142.0 100.0M142.0 100.0L146.0 100.0M146.0 100.0L150.0 100.0M150.0 100.0L154.0 100.0M154.0 100.0L158.0 100.0M158.0 100.0L162.0 100.0M162.0 100.0L166.0 100.0M166.0 100.0L170.0 100.0M170.0 100.0L174.0 101.6M174.0 101.6L178.0 103.2M178.0 103.2L182.0 104.8M182.0 104.8L186.0 106.5M186.0 106.5L190.0 108.1M190.0 108.1L194.0 109.7M194.0 109.7L197.0 113.7M198.0 115.0L202.0 112.0M202.0 112.0L205.5 108.5M206.0 108.0L209.5 104.5M210.0 104.0L214.0 106.5M214.0 106.5L218.0 108.9M218.0 108.9L222.0 111.4M222.0 111.4L225.2 115.2M226.0 116.2L229.2 120.0M230.0 120.9L233.2 124.7M234.0 125.6L238.0 127.1M238.0 127.1L242.0 124.3M242.0 124.3L243.7 129.0M244.3 130.9L246.0 135.6M246.0 135.7L248.5 140.0M249.6 141.7L250.0 142.4M250.0 142.4L254.0 143.1M254.0 143.1L258.0 142.6M258.0 142.6L260.6 138.4M261.7 136.7L262.0 136.1M262.0 136.1L263.8 131.5M264.5 129.6L266.0 125.5M266.0 125.5L267.6 120.8M268.2 118.9L269.7 114.1M270.0 113.3L272.9 109.2M274.0 107.8L278.0 107.9M278.0 107.9L280.7 112.1M281.8 113.8L282.0 114.1M282.0 114.1L283.8 118.8M284.5 120.6L286.0 124.6M286.0 124.6L287.8 129.3M288.5 131.2L290.0 135.2M290.0 135.2L292.2 139.7M293.0 141.5L294.0 143.5M294.0 143.5L297.4 147.1M298.0 147.8L300.6 152.0M301.6 153.7L302.0 154.3M302.0 154.3L304.5 158.7M305.5 160.4L306.0 161.4M306.0 161.4L308.9 165.4M310.0 166.9L314.0 163.9M314.0 163.9L318.0 161.0M318.0 161.0L321.7 157.6M322.0 157.3L325.6 153.8M326.0 153.4L329.5 149.8M330.0 149.3L332.9 145.2M334.0 143.7L336.9 139.6M338.0 138.1L340.9 134.0M342.0 132.5L345.6 129.0M346.0 128.6L349.8 125.3M350.0 125.1L354.0 125.4M354.0 125.4L358.0 127.9M358.0 127.9L362.0 130.5M362.0 130.5L363.8 135.1M364.5 137.0L366.0 140.7M366.0 140.7L367.6 145.5M368.2 147.3L369.8 152.1M370.0 152.6L371.6 157.3M372.2 159.2L373.8 164.0M374.0 164.5L376.3 169.0M377.2 170.7L378.0 172.4M378.0 172.4L380.3 176.8M381.2 178.6L382.0 180.2M382.0 180.2L384.5 184.5M385.5 186.3L386.0 187.1M386.0 187.1L388.5 191.4M389.5 193.2L390.0 194.0M390.0 194.0L392.1 198.5M393.0 200.3L394.0 202.5M394.0 202.5L396.1 207.0M396.9 208.8L398.0 211.3M398.0 211.3L400.1 215.8M400.9 217.7L402.0 220.1M402.0 220.1L403.6 224.9M404.3 226.7L405.9 231.5M406.0 231.9L407.0 236.8M407.5 238.7L408.5 243.6M408.9 245.6L410.0 250.5M410.0 250.6L411.3 255.4M411.8 257.3L413.1 262.2M413.6 264.1L414.0 265.5M414.0 265.5L418.0 265.5M418.0 265.5L422.0 265.5M422.0 265.5L426.0 265.4M426.0 265.4L430.0 265.3M430.0 265.3L434.0 265.2M434.0 265.2L438.0 265.0M438.0 265.0L441.0 269.0M442.0 270.4L444.8 274.6M445.9 276.3L446.0 276.5M446.0 276.5L449.6 279.9M450.0 280.3L453.9 283.4M454.0 283.5L457.9 286.6M458.0 286.7L461.9 289.8M462.0 289.8L466.0 292.8M466.0 292.8L470.0 295.8M470.0 295.8L472.9 299.9M474.0 301.3L476.2 305.8M477.1 307.6L478.0 309.3M478.0 309.3L480.2 313.8M481.1 315.6L482.0 317.4M482.0 317.4L484.2 321.8M485.1 323.6L486.0 325.4M486.0 325.4L490.0 325.4M490.0 325.4L494.0 325.4M494.0 325.4L498.0 325.3M498.0 325.3L502.0 325.0M502.0 325.0L506.0 324.7M506.0 324.7L510.0 324.3M510.0 324.3L514.0 324.0M514.0 324.0L518.0 321.6M518.0 321.6L522.0 319.0M522.0 319.0L526.0 316.4M526.0 316.4L530.0 313.8M530.0 313.8L534.0 311.7M534.0 311.7L537.0 315.7M538.0 317.0L541.0 321.0M542.0 322.3L546.0 321.5M546.0 321.5L550.0 320.3M550.0 320.3L554.0 319.1M554.0 319.1L558.0 319.4M558.0 319.4L562.0 321.8M562.0 321.8L566.0 324.2M566.0 324.2L570.0 326.6M570.0 326.6L573.5 323.0M574.0 322.5L577.2 318.7M578.0 317.8L581.2 314.0M582.0 313.1L585.2 309.3M586.0 308.4L590.0 306.5M590.0 306.5L594.0 305.5M594.0 305.5L598.0 304.5M598.0 304.5L602.0 304.8M602.0 304.8L606.0 305.2M606.0 305.2L610.0 305.6M610.0 305.6L614.0 308.4M614.0 308.4L616.6 312.6M617.7 314.3L618.0 314.8M618.0 314.8L620.6 319.0M621.7 320.7L622.0 321.2M622.0 321.2L624.6 325.4M625.7 327.1L626.0 327.6M626.0 327.6L628.8 331.7M630.0 333.3L630.0 333.3M630.0 333.3L632.9 337.4M634.0 339.0L636.9 343.1M638.0 344.7L641.2 348.6M642.0 349.5L645.7 352.8M646.0 353.1L649.8 356.4M650.0 356.7L653.8 359.9M654.0 360.0L658.0 361.4M658.0 361.4L662.0 359.0M662.0 359.0L665.4 355.4M666.0 354.7L670.0 352.2M670.0 352.2L674.0 349.6M674.0 349.6L678.0 347.3M678.0 347.3L682.0 345.0M682.0 345.0L686.0 344.9M686.0 344.9L689.9 348.0M690.0 348.0L694.0 346.2M694.0 346.2L698.0 344.5M698.0 344.5L701.8 347.7M702.0 347.8L705.0 351.9M706.0 353.2L707.5 358.0M708.1 359.9L709.7 364.7M710.0 365.7L711.2 370.5M711.7 372.5L712.9 377.3M713.4 379.3L714.0 381.7M714.0 381.7L716.2 386.2M717.0 388.0L718.0 390.0M718.0 390.0L719.5 394.8M720.1 396.7L721.6 401.4M722.0 402.7L723.4 407.5M723.9 409.5L725.3 414.3M725.8 416.2L726.0 416.9M726.0 416.9L727.3 421.7M727.9 423.6L729.2 428.4M729.7 430.3L730.0 431.3M730.0 431.3L731.4 436.1M732.0 438.0L733.5 442.8M734.0 444.6L736.1 449.1M736.9 450.9L738.0 453.3M738.0 453.3L741.1 457.2M742.0 458.2L745.1 462.2M746.0 463.2L749.1 467.2M750.0 468.2L753.4 471.9M754.0 472.6L758.0 475.6M758.0 475.6L762.0 478.6M762.0 478.6L766.0 480.3M766.0 480.3L770.0 480.7M770.0 480.7L774.0 481.2M774.0 481.2L776.7 477.0M777.7 475.3L778.0 474.8M778.0 474.8L780.1 470.3M780.9 468.5L782.0 466.2M782.0 466.2L783.4 461.4M783.9 459.5L785.3 454.7M785.8 452.8L786.0 452.2M786.0 452.2L789.8 449.0M790.0 448.9L792.5 453.2M793.5 455.0L794.0 455.8M794.0 455.8L796.5 460.2M797.5 461.9L798.0 462.8M798.0 462.8L801.1 466.7M802.0 467.7L805.2 471.6M806.0 472.5L809.2 476.4M810.0 477.3L813.3 481.1M814.0 481.9L817.5 485.4M818.0 485.9L821.5 489.4M822.0 489.9L825.5 493.4M826.0 493.9L830.0 491.0M830.0 491.0L833.2 487.2M834.0 486.2L836.8 490.4M837.9 492.1L838.0 492.2M838.0 492.2L840.8 496.3M841.9 498.0L842.0 498.2M842.0 498.2L844.6 502.5M845.6 504.2L846.0 504.9M846.0 504.9L848.5 509.2M849.6 510.9L850.0 511.6M850.0 511.6L853.7 515.1M854.0 515.4L858.0 518.4M858.0 518.4L862.0 521.3M862.0 521.3L865.2 525.1M866.0 526.1L869.1 530.0M870.0 531.1L873.1 535.0M874.0 536.1L876.5 540.4M877.5 542.1L878.0 542.9M878.0 542.9L880.5 547.3M881.5 549.0L882.0 549.9M882.0 549.9L884.5 554.2M885.5 556.0L886.0 556.9M886.0 556.9L888.8 561.0M889.9 562.7L890.0 562.9M890.0 562.9L892.8 567.1M893.9 568.7L894.0 568.9M894.0 568.9L896.7 573.1M897.8 574.8L898.0 575.2M898.0 575.2L900.2 579.7M901.1 581.4L902.0 583.1M902.0 583.1L904.2 587.6M905.1 589.4L906.0 591.1M906.0 591.1L907.9 595.7M908.6 597.6L910.0 601.0M910.0 601.0L912.1 605.5M913.0 607.4L914.0 609.6M914.0 609.6L916.5 614.0M917.5 615.7L918.0 616.6M918.0 616.6L920.5 620.9M921.5 622.7L922.0 623.6M922.0 623.6L925.6 627.0M926.0 627.3L930.0 628.5M930.0 628.5L934.0 629.7M934.0 629.7L938.0 630.9M938.0 630.9L942.0 629.2M942.0 629.2L946.0 627.2M946.0 627.2L948.8 623.1M950.0 621.5L950.0 621.4M950.0 621.4L952.4 617.0M953.4 615.3L954.0 614.2M954.0 614.2L957.3 610.4M958.0 609.6L962.0 607.6M962.0 607.6L966.0 605.6M966.0 605.6L970.0 603.6M970.0 603.6L974.0 604.5M974.0 604.5L978.0 605.8M978.0 605.8L982.0 607.1M982.0 607.1L986.0 608.4M986.0 608.4L990.0 609.0M990.0 609.0L994.0 607.0M994.0 607.0L998.0 604.9M998.0 604.9L1002.0 602.9M1002.0 602.9L1006.0 601.6M1006.0 601.6L1010.0 600.8M1010.0 600.8L1014.0 600.0M1014.0 600.0L1018.0 599.3M1018.0 599.3L1021.7 595.9M1022.0 595.5L1025.6 592.0M1026.0 591.6L1030.0 590.5M1030.0 590.5L1033.4 594.2M1034.0 594.9L1037.4 598.6M1038.0 599.3L1041.4 603.0M1042.0 603.7L1046.0 604.2M1046.0 604.2L1048.6 600.0M1049.7 598.3L1050.0 597.7M1050.0 597.7L1052.6 593.5M1053.7 591.8L1054.0 591.2M1054.0 591.2L1057.8 587.9M1058.0 587.7L1062.0 588.3M1062.0 588.3L1066.0 588.9M1066.0 588.9L1070.0 589.4M1070.0 589.4L1074.0 590.0M1074.0 590.0L1078.0 589.5M1078.0 589.5L1082.0 586.9M1082.0 586.9L1086.0 584.2M1086.0 584.2L1090.0 581.6M1090.0 581.6L1094.0 578.9M1094.0 578.9L1097.0 574.9M1098.0 573.5L1100.9 569.4M1102.0 567.8L1104.9 563.8M1106.0 562.2L1108.6 557.9M1109.6 556.2L1110.0 555.5M1110.0 555.5L1112.0 550.9M1112.8 549.1L1114.0 546.2M1114.0 546.2L1116.1 541.6M1117.0 539.8L1118.0 537.7M1118.0 537.7L1122.0 535.3M1122.0 535.3L1126.0 532.9M1126.0 532.9L1130.0 530.5M1130.0 530.5L1134.0 530.3M1134.0 530.3L1138.0 532.6M1138.0 532.6L1142.0 534.8M1142.0 534.8L1146.0 537.1M1146.0 537.1L1150.0 539.4M1150.0 539.4L1152.9 543.4M1154.0 544.9L1155.7 549.6M1156.4 551.5L1158.0 555.9M1158.0 555.9L1159.7 560.6M1160.4 562.5L1162.0 566.9M1162.0 566.9L1164.6 571.2M1165.6 573.0L1166.0 573.7M1166.0 573.7L1170.0 575.1M1170.0 575.1L1174.0 576.6M1174.0 576.6L1178.0 576.6M1178.0 576.6L1182.0 575.3M1182.0 575.3L1186.0 574.0M1186.0 574.0L1190.0 572.7M1190.0 572.7L1194.0 571.4M1194.0 571.4L1198.0 570.1M1198.0 570.1L1202.0 569.4M1202.0 569.4L1206.0 568.6M1206.0 568.6L1210.0 567.9M1210.0 567.9L1214.0 567.2M1214.0 567.2L1218.0 566.4M1218.0 566.4L1222.0 567.5M1222.0 567.5L1225.0 571.5M1226.0 572.8L1229.1 576.7M1230.0 577.8L1234.0 580.8M1234.0 580.8L1238.0 583.8M1238.0 583.8L1242.0 585.9M1242.0 585.9L1246.0 583.9M1246.0 583.9L1250.0 581.9M1250.0 581.9L1254.0 579.7M1254.0 579.7L1258.0 577.4M1258.0 577.4L1262.0 575.0M1262.0 575.0L1266.0 572.6M1266.0 572.6L1268.3 568.2M1269.3 566.4L1270.0 565.1M1270.0 565.1L1271.8 560.4M1272.5 558.5L1274.0 554.5M1274.0 554.5L1276.5 550.1M1277.4 548.4L1278.0 547.4M1278.0 547.4L1282.0 545.0M1282.0 545.0L1286.0 542.6M1286.0 542.6L1290.0 540.1M1290.0 540.1L1294.0 542.7M1294.0 542.7L1297.5 546.3M1298.0 546.8L1302.0 547.7M1302.0 547.7L1306.0 546.4M1306.0 546.4L1310.0 545.2M1310.0 545.2L1314.0 544.0M1314.0 544.0L1318.0 542.7M1318.0 542.7L1322.0 540.9M1322.0 540.9L1326.0 538.5M1326.0 538.5L1330.0 536.9M1330.0 536.9L1334.0 537.5M1334.0 537.5L1338.0 538.2M1338.0 538.2L1342.0 536.9M1342.0 536.9L1346.0 534.0M1346.0 534.0L1350.0 531.2M1350.0 531.2L1353.5 527.5M1354.0 527.0L1356.8 522.8M1357.9 521.1L1358.0 521.0M1358.0 521.0L1360.8 516.8M1361.9 515.2L1362.0 515.0M1362.0 515.0L1364.8 510.9M1365.9 509.2L1366.0 509.0M1366.0 509.0L1369.8 505.7M1370.0 505.5L1374.0 502.5M1374.0 502.5L1378.0 500.5M1378.0 500.5L1381.9 497.4M1382.0 497.3L1384.6 493.0M1385.6 491.3L1386.0 490.7M1386.0 490.7L1388.6 486.4M1389.6 484.7L1390.0 484.0M1390.0 484.0L1393.2 480.2M1394.0 479.2L1398.0 476.6M1398.0 476.6L1402.0 476.6M1402.0 476.6L1405.3 472.8M1406.0 471.9L1408.9 467.9M1410.0 466.3L1414.0 464.3M1414.0 464.3L1418.0 466.3M1418.0 466.3L1420.8 462.1M1421.9 460.5L1422.0 460.2M1422.0 460.2L1424.2 455.7M1425.1 454.0L1426.0 452.1M1426.0 452.1L1428.5 447.8M1429.5 446.1L1430.0 445.3M1430.0 445.3L1432.8 441.1M1433.9 439.5L1434.0 439.3M1434.0 439.3L1437.6 435.8M1438.0 435.4L1441.8 432.2M1442.0 432.1L1445.5 428.5M1446.0 428.1L1447.5 423.3M1448.2 421.4L1449.7 416.7M1450.0 415.8L1451.5 411.0M1452.1 409.1L1453.6 404.3M1454.0 403.0L1455.4 398.2M1455.9 396.3L1457.3 391.5M1457.8 389.6L1458.0 389.0M1458.0 389.0L1458.9 384.1M1459.3 382.2L1460.3 377.3M1460.6 375.3L1461.6 370.4M1461.9 368.4L1462.0 368.1M1462.0 368.1L1463.7 363.4M1464.4 361.5L1466.0 357.0M1466.0 357.0L1468.0 356.4" fill="none" stroke="#007030" stroke-width="2" shape-rendering="crispEdges"/>
<path d="M17.1 321.0L18.0 318.5M18.0 318.5L19.7 313.8M20.3 311.9L22.0 307.2M22.0 307.2L23.6 302.4M24.2 300.5L25.7 295.8M26.0 294.9L27.4 290.1M28.0 288.2L29.4 283.4M30.0 281.5L30.0 281.5M30.0 281.5L31.8 276.8M32.6 275.0L34.0 271.3M34.0 271.3L35.9 266.7M36.6 264.8L38.0 261.3M38.0 261.3L40.2 256.9M41.1 255.1L42.0 253.3M42.0 253.3L44.3 248.8M45.2 247.0L46.0 245.5M46.0 245.5L49.5 241.9M50.0 241.4L54.0 241.4M54.0 241.4L58.0 241.4M58.0 241.4L62.0 241.4M62.0 241.4L66.0 241.4M66.0 241.4L70.0 241.6M70.0 241.6L74.0 242.1M74.0 242.1L78.0 242.6M78.0 242.6L82.0 242.2M82.0 242.2L85.0 238.2M86.0 236.9L88.0 232.4M88.8 230.5L90.0 227.9M90.0 227.9L93.1 223.9M94.0 222.7L97.0 218.7M98.0 217.3L100.0 212.7M100.8 210.9L102.0 208.3M102.0 208.3L103.4 203.5M104.0 201.6L105.5 196.8M106.0 195.0L106.8 190.1M107.2 188.1L108.0 183.2M108.3 181.2L109.1 176.3M109.5 174.3L110.0 171.2M110.0 171.2L111.2 166.3M111.7 164.4L112.8 159.5M113.3 157.5L114.0 154.7M114.0 154.7L115.6 149.9M116.3 148.1L117.9 143.3M118.0 143.0L122.0 145.7M122.0 145.7L125.7 149.0M126.0 149.3L129.3 153.1M130.0 153.9L134.0 152.6M134.0 152.6L138.0 150.5M138.0 150.5L141.8 147.3M142.0 147.2L144.4 142.8M145.4 141.1L146.0 140.0M146.0 140.0L150.0 137.7M150.0 137.7L154.0 138.5M154.0 138.5L158.0 141.2M158.0 141.2L162.0 143.8M162.0 143.8L166.0 146.5M166.0 146.5L170.0 149.2M170.0 149.2L174.0 151.8M174.0 151.8L178.0 154.5M178.0 154.5L181.8 157.8M182.0 158.0L185.5 161.5M186.0 162.0L189.5 165.5M190.0 166.0L193.9 169.1M194.0 169.1L198.0 171.1M198.0 171.1L202.0 170.4M202.0 170.4L204.5 166.1M205.5 164.3L206.0 163.4M206.0 163.4L208.7 159.2M209.8 157.5L210.0 157.1M210.0 157.1L214.0 154.4M214.0 154.4L218.0 156.0M218.0 156.0L221.3 159.8M222.0 160.7L225.3 164.4M226.0 165.2L229.5 168.8M230.0 169.3L233.5 172.8M234.0 173.3L237.5 176.9M238.0 177.4L241.5 180.9M242.0 181.4L246.0 184.4M246.0 184.4L250.0 187.3M250.0 187.3L254.0 189.2M254.0 189.2L257.8 186.0M258.0 185.9L261.8 182.6M262.0 182.5L265.8 179.3M266.0 179.2L269.8 175.9M270.0 175.8L271.3 171.0M271.8 169.0L273.0 164.2M273.5 162.3L274.0 160.5M274.0 160.5L277.3 164.3M278.0 165.0L280.0 169.6M280.8 171.4L282.0 174.1M282.0 174.1L283.9 178.7M284.7 180.5L286.0 183.6M286.0 183.6L288.0 188.2M288.8 190.0L290.0 192.7M290.0 192.7L294.0 194.3M294.0 194.3L298.0 195.9M298.0 195.9L302.0 197.5M302.0 197.5L305.1 201.4M306.0 202.6L308.2 207.1M309.1 208.9L310.0 210.6M310.0 210.6L313.8 213.9M314.0 214.1L318.0 212.1M318.0 212.1L322.0 210.1M322.0 210.1L325.3 206.4M326.0 205.7L328.8 201.5M329.9 199.8L330.0 199.6M330.0 199.6L332.8 195.5M333.9 193.8L334.0 193.6M334.0 193.6L336.8 189.5M338.0 187.9L338.0 187.8M338.0 187.8L340.8 183.7M342.0 182.1L342.0 182.1M342.0 182.1L344.8 178.0M346.0 176.3L346.0 176.3M346.0 176.3L349.7 173.0M350.0 172.7L354.0 173.7M354.0 173.7L358.0 176.2M358.0 176.2L360.4 180.6M361.3 182.4L362.0 183.6M362.0 183.6L364.4 188.0M365.3 189.8L366.0 191.0M366.0 191.0L368.5 195.3M369.5 197.1L370.0 198.0M370.0 198.0L372.6 202.2M373.7 203.9L374.0 204.4M374.0 204.4L376.6 208.6M377.7 210.3L378.0 210.8M378.0 210.8L380.6 215.0M381.7 216.7L382.0 217.2M382.0 217.2L384.1 221.7M385.0 223.5L386.0 225.7M386.0 225.7L388.1 230.3M388.9 232.1L390.0 234.6M390.0 234.6L392.1 239.1M392.9 241.0L394.0 243.4M394.0 243.4L395.8 248.1M396.5 249.9L398.0 253.8M398.0 253.8L399.5 258.5M400.1 260.5L401.6 265.2M402.0 266.5L403.5 271.2M404.1 273.1L405.6 277.9M406.0 279.2L407.5 283.9M408.1 285.8L409.6 290.6M410.0 291.8L411.8 296.5M412.5 298.4L414.0 302.3M414.0 302.3L418.0 303.6M418.0 303.6L422.0 304.9M422.0 304.9L426.0 306.3M426.0 306.3L430.0 307.6M430.0 307.6L434.0 309.2M434.0 309.2L438.0 310.7M438.0 310.7L442.0 312.3M442.0 312.3L446.0 313.9M446.0 313.9L450.0 316.3M450.0 316.3L454.0 319.0M454.0 319.0L458.0 321.6M458.0 321.6L462.0 324.3M462.0 324.3L465.6 327.8M466.0 328.2L469.2 332.0M470.0 333.0L473.2 336.8M474.0 337.8L477.1 341.7M478.0 342.8L480.2 347.3M481.1 349.1L482.0 350.9M482.0 350.9L484.2 355.4M485.1 357.2L486.0 359.0M486.0 359.0L489.5 362.5M490.0 363.0L493.5 366.5M494.0 367.0L497.8 370.2M498.0 370.4L502.0 371.1M502.0 371.1L506.0 371.5M506.0 371.5L509.8 368.2M510.0 368.0L513.8 364.7M514.0 364.5L517.7 361.2M518.0 360.9L521.5 357.3M522.0 356.9L525.5 353.3M526.0 352.8L529.5 349.3M530.0 348.8L534.0 350.5M534.0 350.5L537.7 353.8M538.0 354.0L541.7 357.3M542.0 357.5L546.0 356.3M546.0 356.3L550.0 354.8M550.0 354.8L554.0 353.4M554.0 353.4L558.0 352.3M558.0 352.3L562.0 351.3M562.0 351.3L566.0 352.2M566.0 352.2L569.1 356.2M570.0 357.3L573.1 361.2M574.0 362.3L578.0 363.1M578.0 363.1L582.0 360.1M582.0 360.1L586.0 357.1M586.0 357.1L590.0 354.8M590.0 354.8L594.0 352.8M594.0 352.8L598.0 350.8M598.0 350.8L602.0 348.8M602.0 348.8L606.0 346.8M606.0 346.8L610.0 345.8M610.0 345.8L612.2 350.3M613.1 352.1L614.0 353.8M614.0 353.8L616.2 358.3M617.1 360.1L618.0 361.8M618.0 361.8L620.2 366.3M621.1 368.1L622.0 369.8M622.0 369.8L624.4 374.2M625.3 376.0L626.0 377.2M626.0 377.2L628.5 381.6M629.5 383.3L630.0 384.3M630.0 384.3L632.5 388.6M633.5 390.3L634.0 391.3M634.0 391.3L638.0 392.7M638.0 392.7L642.0 392.7M642.0 392.7L646.0 392.7M646.0 392.7L650.0 392.7M650.0 392.7L654.0 392.7M654.0 392.7L658.0 393.0M658.0 393.0L662.0 393.3M662.0 393.3L666.0 391.4M666.0 391.4L669.4 387.8M670.0 387.1L673.7 383.7M674.0 383.4L677.8 380.2M678.0 380.0L682.0 378.0M682.0 378.0L686.0 378.0M686.0 378.0L690.0 378.5M690.0 378.5L694.0 379.8M694.0 379.8L698.0 382.3M698.0 382.3L701.2 386.1M702.0 387.1L703.9 391.8M704.7 393.6L706.0 396.9M706.0 396.9L707.6 401.6M708.2 403.5L709.8 408.3M710.0 408.9L711.5 413.7M712.2 415.6L713.7 420.3M714.0 421.2L715.4 426.1M715.9 428.0L717.3 432.8M717.9 434.7L718.0 435.1M718.0 435.1L719.2 439.9M719.7 441.9L721.0 446.7M721.5 448.7L722.0 450.8M722.0 450.8L723.2 455.6M723.7 457.5L725.0 462.4M725.5 464.3L726.0 466.4M726.0 466.4L727.8 471.1M728.5 473.0L730.0 476.9M730.0 476.9L732.2 481.3M733.1 483.1L734.0 484.8M734.0 484.8L736.2 489.3M737.1 491.1L738.0 492.8M738.0 492.8L740.6 497.1M741.7 498.8L742.0 499.3M742.0 499.3L744.7 503.5M745.8 505.2L746.0 505.5M746.0 505.5L748.7 509.7M749.8 511.4L750.0 511.7M750.0 511.7L752.7 515.9M753.8 517.6L754.0 517.9M754.0 517.9L757.9 521.0M758.0 521.1L762.0 523.7M762.0 523.7L766.0 526.4M766.0 526.4L770.0 529.0M770.0 529.0L774.0 527.6M774.0 527.6L776.8 523.4M777.9 521.8L778.0 521.6M778.0 521.6L780.8 517.5M781.9 515.8L782.0 515.7M782.0 515.7L785.1 511.8M786.0 510.7L789.8 507.5M790.0 507.3L793.9 510.5M794.0 510.6L797.9 513.7M798.0 513.8L801.9 516.9M802.0 517.0L806.0 519.7M806.0 519.7L810.0 521.7M810.0 521.7L814.0 523.7M814.0 523.7L818.0 525.7M818.0 525.7L822.0 527.5M822.0 527.5L826.0 527.5M826.0 527.5L830.0 527.5M830.0 527.5L834.0 528.2M834.0 528.2L837.5 531.7M838.0 532.2L841.5 535.7M842.0 536.2L845.5 539.7M846.0 540.2L849.5 543.7M850.0 544.2L853.3 547.9M854.0 548.7L857.3 552.5M858.0 553.3L861.3 557.1M862.0 558.0L865.3 561.8M866.0 562.6L869.1 566.6M870.0 567.8L872.8 572.0M873.9 573.6L874.0 573.8M874.0 573.8L876.8 578.0M877.9 579.6L878.0 579.8M878.0 579.8L880.8 584.0M881.9 585.7L882.0 585.8M882.0 585.8L884.8 590.0M885.9 591.7L886.0 591.9M886.0 591.9L888.2 596.4M889.1 598.2L890.0 599.9M890.0 599.9L892.2 604.4M893.1 606.2L894.0 607.9M894.0 607.9L896.2 612.4M897.1 614.2L898.0 615.9M898.0 615.9L900.2 620.4M901.1 622.2L902.0 623.9M902.0 623.9L904.4 628.3M905.3 630.1L906.0 631.3M906.0 631.3L908.5 635.6M909.5 637.4L910.0 638.3M910.0 638.3L912.5 642.7M913.5 644.4L914.0 645.3M914.0 645.3L917.5 648.9M918.0 649.5L921.9 652.6M922.0 652.7L925.9 655.8M926.0 655.9L930.0 658.9M930.0 658.9L934.0 659.7M934.0 659.7L938.0 660.5M938.0 660.5L942.0 661.3M942.0 661.3L946.0 659.9M946.0 659.9L949.5 656.4M950.0 655.9L953.5 652.4M954.0 651.9L957.5 648.4M958.0 647.9L961.5 644.4M962.0 643.9L965.5 640.4M966.0 639.9L970.0 638.6M970.0 638.6L974.0 639.0M974.0 639.0L978.0 639.3M978.0 639.3L982.0 639.6M982.0 639.6L986.0 640.0M986.0 640.0L990.0 638.5M990.0 638.5L994.0 636.8M994.0 636.8L998.0 635.1M998.0 635.1L1002.0 633.5M1002.0 633.5L1006.0 631.6M1006.0 631.6L1010.0 629.6M1010.0 629.6L1014.0 627.6M1014.0 627.6L1018.0 625.6M1018.0 625.6L1022.0 623.6M1022.0 623.6L1026.0 623.1M1026.0 623.1L1030.0 624.5M1030.0 624.5L1034.0 625.8M1034.0 625.8L1038.0 627.2M1038.0 627.2L1042.0 628.2M1042.0 628.2L1045.9 625.0M1046.0 625.0L1049.9 621.8M1050.0 621.7L1053.9 618.6M1054.0 618.5L1058.0 616.8M1058.0 616.8L1062.0 617.1M1062.0 617.1L1066.0 617.4M1066.0 617.4L1070.0 617.6M1070.0 617.6L1074.0 617.9M1074.0 617.9L1078.0 616.9M1078.0 616.9L1081.7 613.6M1082.0 613.3L1085.7 610.0M1086.0 609.8L1089.7 606.4M1090.0 606.2L1093.4 602.5M1094.0 601.8L1097.2 597.9M1098.0 597.0L1101.2 593.1M1102.0 592.2L1105.2 588.3M1106.0 587.3L1108.2 582.8M1109.1 581.0L1110.0 579.3M1110.0 579.3L1112.2 574.8M1113.1 573.0L1114.0 571.2M1114.0 571.2L1116.4 566.8M1117.3 565.1L1118.0 563.9M1118.0 563.9L1122.0 561.4M1122.0 561.4L1126.0 558.9M1126.0 558.9L1130.0 557.4M1130.0 557.4L1134.0 559.9M1134.0 559.9L1138.0 562.4M1138.0 562.4L1141.7 565.7M1142.0 566.0L1144.7 570.2M1145.7 571.9L1146.0 572.3M1146.0 572.3L1148.7 576.6M1149.7 578.3L1150.0 578.7M1150.0 578.7L1152.7 583.0M1153.7 584.7L1154.0 585.1M1154.0 585.1L1156.8 589.3M1157.9 590.9L1158.0 591.0M1158.0 591.0L1160.9 595.1M1162.0 596.7L1164.9 600.8M1166.0 602.3L1168.9 606.4M1170.0 608.0L1174.0 605.9M1174.0 605.9L1178.0 603.9M1178.0 603.9L1182.0 602.0M1182.0 602.0L1186.0 601.3M1186.0 601.3L1190.0 600.6M1190.0 600.6L1194.0 600.0M1194.0 600.0L1198.0 599.2M1198.0 599.2L1202.0 597.8M1202.0 597.8L1206.0 596.4M1206.0 596.4L1210.0 594.9M1210.0 594.9L1214.0 593.5M1214.0 593.5L1218.0 592.1M1218.0 592.1L1222.0 594.1M1222.0 594.1L1226.0 596.2M1226.0 596.2L1230.0 598.4M1230.0 598.4L1233.5 601.9M1234.0 602.4L1237.5 605.9M1238.0 606.3L1241.5 609.9M1242.0 610.3L1246.0 610.3M1246.0 610.3L1249.2 606.5M1250.0 605.5L1253.2 601.7M1254.0 600.8L1257.2 596.9M1258.0 596.0L1261.5 592.4M1262.0 591.8L1265.5 588.3M1266.0 587.8L1269.5 584.3M1270.0 583.8L1273.5 580.3M1274.0 579.8L1277.5 576.3M1278.0 575.8L1281.6 572.3M1282.0 571.8L1285.6 568.3M1286.0 567.9L1290.0 566.6M1290.0 566.6L1294.0 568.1M1294.0 568.1L1298.0 569.6M1298.0 569.6L1302.0 570.0M1302.0 570.0L1306.0 569.6M1306.0 569.6L1310.0 569.2M1310.0 569.2L1314.0 568.8M1314.0 568.8L1318.0 567.2M1318.0 567.2L1322.0 565.6M1322.0 565.6L1326.0 563.9M1326.0 563.9L1330.0 562.2M1330.0 562.2L1334.0 561.9M1334.0 561.9L1338.0 561.9M1338.0 561.9L1342.0 561.4M1342.0 561.4L1345.5 557.9M1346.0 557.4L1349.5 553.9M1350.0 553.5L1353.5 549.9M1354.0 549.5L1357.3 545.7M1358.0 544.9L1361.0 540.9M1362.0 539.7L1365.0 535.7M1366.0 534.4L1369.0 530.5M1370.0 529.2L1373.1 525.2M1374.0 524.0L1377.9 520.9M1378.0 520.8L1381.9 517.7M1382.0 517.6L1385.9 514.5M1386.0 514.4L1389.9 511.3M1390.0 511.2L1394.0 508.3M1394.0 508.3L1398.0 505.7M1398.0 505.7L1402.0 503.0M1402.0 503.0L1406.0 500.0M1406.0 500.0L1410.0 497.1M1410.0 497.1L1414.0 494.1M1414.0 494.1L1418.0 491.3M1418.0 491.3L1422.0 489.3M1422.0 489.3L1425.2 485.4M1426.0 484.4L1428.2 480.0M1429.1 478.2L1430.0 476.5M1430.0 476.5L1432.7 472.3M1433.8 470.6L1434.0 470.3M1434.0 470.3L1437.4 466.6M1438.0 466.0L1442.0 463.7M1442.0 463.7L1446.0 461.4M1446.0 461.4L1449.9 458.2M1450.0 458.1L1452.2 453.6M1453.1 451.8L1454.0 450.1M1454.0 450.1L1454.7 445.1M1455.0 443.2L1455.6 438.2M1455.9 436.2L1456.6 431.3M1456.9 429.3L1457.6 424.3M1457.8 422.4L1458.0 421.2M1458.0 421.2L1459.1 416.3M1459.5 414.3L1460.6 409.5M1461.0 407.5L1462.0 403.0M1462.0 403.0L1464.0 398.4M1464.8 396.6L1466.0 394.0M1466.0 394.0L1468.0 392.7" fill="none" stroke="#007030" stroke-width="2" shape-rendering="crispEdges"/>
<path d="M15.1 367.7L16.7 363.0M17.4 361.1L18.0 359.3M18.0 359.3L19.6 354.6M20.3 352.7L21.9 348.0M22.0 347.8L23.6 343.0M24.2 341.2L25.8 336.4M26.0 335.9L27.5 331.1M28.1 329.2L29.6 324.4M30.0 323.3L31.4 318.5M32.0 316.6L33.5 311.8M34.0 310.0L36.8 305.9M37.9 304.2L38.0 304.1M38.0 304.1L40.6 299.8M41.7 298.1L42.0 297.7M42.0 297.7L44.5 293.3M45.4 291.6L46.0 290.6M46.0 290.6L50.0 287.9M50.0 287.9L54.0 285.4M54.0 285.4L58.0 284.6M58.0 284.6L62.0 286.6M62.0 286.6L66.0 284.1M66.0 284.1L69.9 281.0M70.0 280.9L74.0 279.4M74.0 279.4L78.0 280.9M78.0 280.9L82.0 282.5M82.0 282.5L86.0 283.1M86.0 283.1L89.7 279.7M90.0 279.4L93.6 276.0M94.0 275.7L97.6 272.2M98.0 271.8L102.0 269.0M102.0 269.0L104.5 264.7M105.5 262.9L106.0 262.1M106.0 262.1L107.0 257.3M107.4 255.3L108.5 250.4M108.9 248.4L109.9 243.5M110.0 243.0L111.0 238.1M111.4 236.1L112.3 231.2M112.7 229.2L113.7 224.3M114.0 222.6L116.1 218.1M116.9 216.3L118.0 213.9M118.0 213.9L121.4 217.6M122.0 218.2L125.6 221.6M126.0 222.0L130.0 220.6M130.0 220.6L133.9 217.5M134.0 217.4L137.8 214.1M138.0 213.9L141.8 210.6M142.0 210.5L145.6 207.0M146.0 206.6L148.6 202.3M149.7 200.6L150.0 200.2M150.0 200.2L152.7 196.0M153.8 194.3L154.0 194.0M154.0 194.0L157.6 197.5M158.0 197.9L162.0 198.5M162.0 198.5L166.0 199.1M166.0 199.1L170.0 200.4M170.0 200.4L174.0 201.9M174.0 201.9L178.0 201.0M178.0 201.0L181.2 204.9M182.0 205.9L184.0 210.5M184.8 212.3L186.0 215.0M186.0 215.0L188.4 219.4M189.3 221.1L190.0 222.3M190.0 222.3L192.9 226.4M194.0 228.0L196.9 232.1M198.0 233.7L200.9 237.8M202.0 239.4L204.6 235.1M205.6 233.4L206.0 232.7M206.0 232.7L208.0 228.1M208.7 226.2L210.0 223.2M210.0 223.2L214.0 220.6M214.0 220.6L218.0 217.9M218.0 217.9L222.0 215.3M222.0 215.3L226.0 216.1M226.0 216.1L230.0 217.3M230.0 217.3L234.0 218.5M234.0 218.5L238.0 221.2M238.0 221.2L241.0 225.1M242.0 226.4L245.0 230.4M246.0 231.6L249.0 235.6M250.0 236.8L254.0 234.0M254.0 234.0L257.5 230.4M258.0 230.0L261.5 226.4M262.0 225.9L265.5 222.4M266.0 221.9L269.0 217.9M270.0 216.6L274.0 214.2M274.0 214.2L276.2 218.7M277.1 220.5L278.0 222.2M278.0 222.2L280.5 226.5M281.5 228.3L282.0 229.2M282.0 229.2L286.0 230.6M286.0 230.6L290.0 231.9M290.0 231.9L294.0 233.3M294.0 233.3L298.0 234.6M298.0 234.6L300.3 239.1M301.2 240.8L302.0 242.3M302.0 242.3L304.2 246.7M305.1 248.5L306.0 250.2M306.0 250.2L308.3 254.7M309.2 256.4L310.0 257.9M310.0 257.9L312.8 262.1M313.9 263.8L314.0 264.0M314.0 264.0L318.0 261.8M318.0 261.8L321.1 257.9M322.0 256.8L325.1 252.9M326.0 251.9L329.2 248.0M330.0 247.1L333.2 243.2M334.0 242.3L337.2 238.4M338.0 237.5L340.6 233.2M341.7 231.5L342.0 231.0M342.0 231.0L344.1 226.5M344.9 224.6L346.0 222.3M346.0 222.3L349.3 218.5M350.0 217.7L353.5 221.2M354.0 221.7L357.5 225.2M358.0 225.7L361.6 229.1M362.0 229.5L365.7 232.8M366.0 233.1L369.7 236.4M370.0 236.7L373.7 240.0M374.0 240.3L376.8 244.5M377.9 246.1L378.0 246.3M378.0 246.3L380.8 250.4M381.9 252.1L382.0 252.2M382.0 252.2L384.8 256.4M385.9 258.0L386.0 258.2M386.0 258.2L388.8 262.4M389.9 264.1L390.0 264.3M390.0 264.3L392.8 268.5M393.9 270.1L394.0 270.4M394.0 270.4L395.7 275.1M396.4 276.9L398.0 281.5M398.0 281.5L399.0 286.4M399.5 288.3L400.5 293.2M400.9 295.2L402.0 300.0M402.0 300.1L403.3 305.0M403.8 306.9L405.0 311.8M405.5 313.7L406.0 315.6M406.0 315.6L408.2 320.1M409.1 321.8L410.0 323.6M410.0 323.6L412.2 328.0M413.1 329.8L414.0 331.5M414.0 331.5L416.2 336.0M417.1 337.8L418.0 339.5M418.0 339.5L422.0 340.7M422.0 340.7L426.0 339.9M426.0 339.9L430.0 339.1M430.0 339.1L434.0 340.0M434.0 340.0L437.0 344.0M438.0 345.4L441.0 349.4M442.0 350.8L445.9 354.0M446.0 354.1L450.0 355.2M450.0 355.2L454.0 356.3M454.0 356.3L458.0 357.4M458.0 357.4L462.0 358.5M462.0 358.5L465.7 361.8M466.0 362.1L469.0 366.1M470.0 367.4L473.0 371.4M474.0 372.8L477.0 376.8M478.0 378.2L480.7 382.4M481.7 384.1L482.0 384.5M482.0 384.5L484.2 389.0M485.1 390.8L486.0 392.5M486.0 392.5L488.2 397.0M489.1 398.8L490.0 400.6M490.0 400.6L492.2 405.0M493.1 406.8L494.0 408.6M494.0 408.6L496.7 412.8M497.8 414.4L498.0 414.7M498.0 414.7L502.0 412.1M502.0 412.1L506.0 409.4M506.0 409.4L510.0 406.8M510.0 406.8L514.0 404.1M514.0 404.1L517.3 400.4M518.0 399.5L521.2 395.7M522.0 394.9L525.2 391.0M526.0 390.2L529.2 386.4M530.0 385.5L534.0 387.3M534.0 387.3L537.5 390.8M538.0 391.3L541.5 394.8M542.0 395.3L546.0 393.6M546.0 393.6L550.0 391.6M550.0 391.6L554.0 389.5M554.0 389.5L558.0 387.5M558.0 387.5L562.0 389.5M562.0 389.5L565.8 392.7M566.0 392.9L569.8 396.1M570.0 396.2L573.8 399.5M574.0 399.6L578.0 400.7M578.0 400.7L582.0 399.7M582.0 399.7L586.0 398.7M586.0 398.7L590.0 396.5M590.0 396.5L594.0 394.0M594.0 394.0L598.0 391.4M598.0 391.4L602.0 388.8M602.0 388.8L606.0 386.2M606.0 386.2L608.7 390.4M609.8 392.1L610.0 392.4M610.0 392.4L612.1 397.0M613.0 398.8L614.0 400.9M614.0 400.9L616.1 405.4M617.0 407.2L618.0 409.3M618.0 409.3L620.4 413.7M621.3 415.5L622.0 416.8M622.0 416.8L625.0 420.8M626.0 422.1L629.0 426.1M630.0 427.5L633.0 431.5M634.0 432.8L637.3 436.5M638.0 437.3L642.0 434.6M642.0 434.6L646.0 431.8M646.0 431.8L649.9 428.7M650.0 428.6L653.7 425.2M654.0 425.0L658.0 424.6M658.0 424.6L661.7 427.9M662.0 428.1L666.0 426.4M666.0 426.4L669.8 423.2M670.0 423.0L673.2 419.1M674.0 418.1L676.5 413.8M677.5 412.1L678.0 411.3M678.0 411.3L682.0 410.5M682.0 410.5L686.0 411.5M686.0 411.5L690.0 410.3M690.0 410.3L694.0 411.8M694.0 411.8L696.8 416.0M697.9 417.6L698.0 417.8M698.0 417.8L699.8 422.4M700.6 424.3L702.0 427.9M702.0 427.9L703.6 432.6M704.2 434.5L705.8 439.3M706.0 440.0L708.2 444.5M709.1 446.3L710.0 448.1M710.0 448.1L712.1 452.6M712.9 454.4L714.0 456.8M714.0 456.8L715.6 461.5M716.2 463.4L717.8 468.2M718.0 468.8L719.7 473.5M720.4 475.4L722.0 479.8M722.0 479.8L723.7 484.5M724.4 486.4L726.0 490.5M726.0 490.5L727.8 495.2M728.5 497.1L730.0 501.1M730.0 501.1L731.8 505.8M732.5 507.7L734.0 511.7M734.0 511.7L735.7 516.4M736.3 518.3L738.0 523.0M738.0 523.0L739.6 527.8M740.2 529.7L741.8 534.4M742.0 535.1L743.8 539.7M744.5 541.6L746.0 545.3M746.0 545.3L748.2 549.8M749.1 551.6L750.0 553.3M750.0 553.3L752.9 557.4M754.0 559.0L757.5 562.6M758.0 563.1L761.5 566.6M762.0 567.1L765.8 570.3M766.0 570.4L770.0 573.4M770.0 573.4L774.0 576.4M774.0 576.4L777.9 573.2M778.0 573.1L781.0 569.1M782.0 567.8L785.9 564.7M786.0 564.7L790.0 563.3M790.0 563.3L794.0 562.0M794.0 562.0L798.0 560.7M798.0 560.7L802.0 559.7M802.0 559.7L806.0 560.5M806.0 560.5L810.0 561.3M810.0 561.3L814.0 562.1M814.0 562.1L818.0 563.0M818.0 563.0L822.0 564.0M822.0 564.0L826.0 565.0M826.0 565.0L830.0 567.3M830.0 567.3L834.0 570.3M834.0 570.3L838.0 573.3M838.0 573.3L842.0 574.9M842.0 574.9L846.0 575.9M846.0 575.9L850.0 576.9M850.0 576.9L851.9 581.5M852.7 583.4L854.0 586.6M854.0 586.6L856.1 591.1M856.9 592.9L858.0 595.2M858.0 595.2L862.0 597.2M862.0 597.2L866.0 599.2M866.0 599.2L870.0 602.1M870.0 602.1L873.4 605.8M874.0 606.4L877.4 610.0M878.0 610.7L880.8 614.8M881.9 616.5L882.0 616.6M882.0 616.6L884.2 621.0M885.1 622.8L886.0 624.5M886.0 624.5L888.2 629.0M889.1 630.8L890.0 632.5M890.0 632.5L892.2 636.9M893.1 638.7L894.0 640.4M894.0 640.4L898.0 643.3M898.0 643.3L902.0 645.8M902.0 645.8L904.4 650.2M905.3 652.0L906.0 653.3M906.0 653.3L907.3 658.1M907.8 660.0L909.1 664.9M909.6 666.8L910.0 668.2M910.0 668.2L911.7 672.9M912.4 674.8L914.0 679.1M914.0 679.1L917.5 682.6M918.0 683.1L921.9 686.2M922.0 686.3L926.0 687.8M926.0 687.8L930.0 689.4M930.0 689.4L934.0 691.0M934.0 691.0L938.0 692.6M938.0 692.6L942.0 693.9M942.0 693.9L946.0 694.8M946.0 694.8L950.0 695.6M950.0 695.6L952.3 691.1M953.2 689.3L954.0 687.7M954.0 687.7L955.9 683.1M956.6 681.2L958.0 677.8M958.0 677.8L960.5 673.5M961.5 671.7L962.0 670.8M962.0 670.8L965.1 666.9M966.0 665.8L970.0 666.8M970.0 666.8L974.0 667.7M974.0 667.7L978.0 668.4M978.0 668.4L982.0 669.1M982.0 669.1L986.0 669.8M986.0 669.8L990.0 670.5M990.0 670.5L994.0 669.5M994.0 669.5L998.0 668.4M998.0 668.4L1002.0 667.1M1002.0 667.1L1006.0 665.1M1006.0 665.1L1010.0 663.1M1010.0 663.1L1014.0 661.1M1014.0 661.1L1018.0 659.1M1018.0 659.1L1022.0 657.2M1022.0 657.2L1026.0 655.2M1026.0 655.2L1030.0 653.2M1030.0 653.2L1033.7 656.6M1034.0 656.9L1037.7 660.2M1038.0 660.5L1041.7 663.9M1042.0 664.2L1045.7 667.5M1046.0 667.8L1050.0 665.9M1050.0 665.9L1053.0 661.9M1054.0 660.5L1057.0 656.5M1058.0 655.2L1061.0 651.2M1062.0 649.9L1065.2 646.0M1066.0 645.1L1069.8 641.9M1070.0 641.7L1073.8 638.5M1074.0 638.4L1077.8 635.2M1078.0 635.1L1081.8 631.9M1082.0 631.7L1085.3 627.9M1086.0 627.1L1089.2 623.3M1090.0 622.3L1093.2 618.5M1094.0 617.5L1097.3 613.7M1098.0 612.9L1101.5 609.4M1102.0 608.9L1105.5 605.4M1106.0 604.9L1109.5 601.4M1110.0 600.9L1113.4 597.3M1114.0 596.7L1117.4 593.0M1118.0 592.3L1121.4 588.6M1122.0 587.9L1125.4 584.2M1126.0 583.6L1130.0 584.9M1130.0 584.9L1132.9 588.9M1134.0 590.4L1136.9 594.5M1138.0 596.0L1140.9 600.0M1142.0 601.5L1144.9 605.5M1146.0 607.0L1149.2 610.9M1150.0 611.8L1153.3 615.6M1154.0 616.5L1157.3 620.3M1158.0 621.2L1161.3 625.0M1162.0 625.8L1165.4 629.5M1166.0 630.2L1169.6 633.7M1170.0 634.2L1173.6 637.7M1174.0 638.1L1178.0 637.4M1178.0 637.4L1181.1 633.4M1182.0 632.3L1185.1 628.4M1186.0 627.3L1190.0 625.5M1190.0 625.5L1194.0 625.6M1194.0 625.6L1198.0 625.4M1198.0 625.4L1202.0 622.7M1202.0 622.7L1206.0 620.0M1206.0 620.0L1210.0 617.3M1210.0 617.3L1214.0 614.7M1214.0 614.7L1218.0 615.3M1218.0 615.3L1222.0 616.9M1222.0 616.9L1226.0 618.6M1226.0 618.6L1230.0 620.3M1230.0 620.3L1234.0 623.1M1234.0 623.1L1237.2 626.9M1238.0 627.9L1241.2 631.7M1242.0 632.7L1245.2 636.5M1246.0 637.5L1250.0 635.2M1250.0 635.2L1253.1 631.3M1254.0 630.2L1257.1 626.3M1258.0 625.2L1261.7 621.9M1262.0 621.6L1265.9 618.5M1266.0 618.4L1269.9 615.3M1270.0 615.2L1273.6 611.7M1274.0 611.3L1276.5 606.9M1277.5 605.2L1278.0 604.3M1278.0 604.3L1280.5 600.0M1281.5 598.2L1282.0 597.3M1282.0 597.3L1285.0 593.4M1286.0 592.1L1290.0 592.1M1290.0 592.1L1294.0 592.1M1294.0 592.1L1298.0 592.1M1298.0 592.1L1302.0 592.1M1302.0 592.1L1306.0 592.7M1306.0 592.7L1310.0 593.3M1310.0 593.3L1314.0 594.0M1314.0 594.0L1318.0 594.7M1318.0 594.7L1322.0 594.0M1322.0 594.0L1326.0 592.0M1326.0 592.0L1330.0 590.0M1330.0 590.0L1334.0 588.0M1334.0 588.0L1338.0 586.0M1338.0 586.0L1342.0 583.3M1342.0 583.3L1346.0 580.7M1346.0 580.7L1349.7 577.3M1350.0 576.9L1353.5 573.4M1354.0 572.8L1357.7 569.4M1358.0 569.1L1361.8 565.9M1362.0 565.8L1365.8 562.6M1366.0 562.5L1368.7 558.3M1369.7 556.6L1370.0 556.1M1370.0 556.1L1372.5 551.8M1373.5 550.1L1374.0 549.2M1374.0 549.2L1377.5 545.6M1378.0 545.1L1381.7 541.7M1382.0 541.4L1386.0 538.8M1386.0 538.8L1390.0 536.1M1390.0 536.1L1394.0 533.8M1394.0 533.8L1398.0 531.8M1398.0 531.8L1402.0 529.8M1402.0 529.8L1406.0 527.8M1406.0 527.8L1410.0 524.9M1410.0 524.9L1414.0 521.9M1414.0 521.9L1418.0 518.9M1418.0 518.9L1422.0 517.0M1422.0 517.0L1426.0 517.0M1426.0 517.0L1428.3 512.6M1429.2 510.8L1430.0 509.3M1430.0 509.3L1431.8 504.7M1432.5 502.8L1434.0 498.6M1434.0 498.6L1438.0 497.0M1438.0 497.0L1442.0 495.4M1442.0 495.4L1446.0 493.4M1446.0 493.4L1450.0 492.2M1450.0 492.2L1454.0 490.3M1454.0 490.3L1455.6 485.6M1456.2 483.7L1457.8 478.9M1458.0 478.3L1459.6 473.5M1460.2 471.6L1461.8 466.9M1462.0 466.1L1463.4 461.4M1464.0 459.4L1465.5 454.7M1466.0 452.9L1467.2 448.7" fill="none" stroke="#007030" stroke-width="2" shape-rendering="crispEdges"/>
</g>
<g stroke="#0080ff" stroke-width="3" shape-rendering="crispEdges">
<line x1="998" y1="690.5" x2="1403.5" y2="764"/>
<line x1="1301.5" y1="729.5" x2="1403.5" y2="725.5"/>
<line x1="1321.5" y1="763.5" x2="1403.5" y2="758.5"/>
</g>
</svg>
<div class="a" style="left:12px;top:91px;width:146px;height:19px;background:#88f8fc"></div>
<div class="a" style="left:12px;top:110px;width:77px;height:20px;background:#88f8fc"></div>
<div class="a" style="left:158px;top:91px;width:220px;height:19px;background:#fff"></div>
<div class="a" style="left:432px;top:91px;width:502px;height:19px;background:#fff"></div>
<div class="a" style="left:378px;top:91px;width:54px;height:19px;background:#000"></div>
<div class="t" style="left:13.2px;top:92px;transform:scaleX(1.006)">[Sim]</div>
<div class="t" style="left:56.8px;top:92px;transform:scaleX(0.931)">Trade: 1@1.120</div>
<div class="t" style="left:162.0px;top:92px;transform:scaleX(0.953)">Sim Fills</div>
<div class="t" style="left:223.4px;top:92px;transform:scaleX(0.983)">CADNZD [C]</div>
<div class="t" style="left:315.8px;top:92px;transform:scaleX(1.028)">Daily</div>
<div class="t" style="left:358.8px;top:92px;transform:scaleX(0.925)">#1</div>
<div class="t" style="left:378.7px;top:92px;transform:scaleX(0.918);color:#fff">C=1.147</div>
<div class="t" style="left:437.0px;top:92px;transform:scaleX(0.955)">2014-10-01 00:00:00</div>
<div class="t" style="left:578.4px;top:92px;transform:scaleX(0.97)">Keltner Channel</div>
<div class="t" style="left:694.7px;top:92px;transform:scaleX(0.928)">(OHLC Avg, 31, 31, 2.2, 2.2, Exp, Exp)</div>
<div class="t" style="left:13.3px;top:112px;font-size:15.6px;transform:scaleX(0.865)">DPL: 0.000P</div>
<div class="pl" style="top:158.9px">1.220</div><div class="pl" style="top:215.6px">1.200</div><div class="pl" style="top:272.3px">1.180</div><div class="pl" style="top:329.0px">1.160</div><div class="pl" style="top:385.7px">1.140</div><div class="pl" style="top:442.4px">1.120</div><div class="pl" style="top:499.0px">1.100</div><div class="pl" style="top:555.7px">1.080</div><div class="pl" style="top:612.4px">1.060</div><div class="pl" style="top:669.1px">1.040</div><div class="pl" style="top:725.8px">1.020</div><div class="pl" style="top:782.5px">1.000</div>
<div class="a" style="left:1485px;top:364px;width:37px;height:20px;background:#000"></div>
<div class="pl" style="top:365.5px;left:1486px;color:#fff;letter-spacing:-1.15px">1.147</div>
<div class="dn" style="left:9px">3</div><div class="dn" style="left:30px">13</div><div class="dn" style="left:57px">22</div><div class="db" style="left:87px;width:23px">Jun</div><div class="dn" style="left:121px">13</div><div class="db" style="left:169px;width:19px">Jul</div><div class="dn" style="left:197px">9</div><div class="dn" style="left:216px">17</div><div class="db" style="left:256px;width:29px">Aug</div><div class="dn" style="left:297px">14</div><div class="db" style="left:345px;width:27px">Sep</div><div class="dn" style="left:382px">12</div><div class="db" style="left:430px;width:25px">Oct</div><div class="dn" style="left:465px">11</div><div class="dn" style="left:493px">22</div><div class="db" style="left:520px;width:29px">Nov</div><div class="dn" style="left:561px">14</div><div class="db" style="left:604px;width:28px">Dec</div><div class="dn" style="left:641px">12</div><div class="db" style="left:685px;width:34px">2014</div><div class="dn" style="left:729px">15</div><div class="db" style="left:777px;width:26px">Feb</div><div class="dn" style="left:813px">13</div><div class="db" style="left:856px;width:28px">Mar</div><div class="dn" style="left:893px">13</div><div class="db" style="left:941px;width:26px">Apr</div><div class="dn" style="left:977px">11</div><div class="db" style="left:1023px;width:30px">May</div><div class="dn" style="left:1065px">14</div><div class="db" style="left:1115px;width:23px">Jun</div><div class="dn" style="left:1149px">12</div><div class="db" style="left:1201px;width:19px">Jul</div><div class="dn" style="left:1229px">9</div><div class="dn" style="left:1249px">17</div><div class="db" style="left:1288px;width:29px">Aug</div><div class="dn" style="left:1329px">14</div><div class="db" style="left:1373px;width:27px">Sep</div><div class="dn" style="left:1409px">11</div><div class="db" style="left:1462px;width:25px">Oct</div><div class="db" style="left:1509px;width:17px;background:#00c000;color:#000">3</div>
<!-- scrollbar -->
<div class="a" style="left:9px;top:866px;width:1518px;height:21px;background:linear-gradient(#e3e3e3,#ececec 20%,#ececec)"></div>
<div class="a" style="left:9px;top:866px;width:1518px;height:1px;background:#dcdcdc"></div>
<svg class="a" style="left:14px;top:870px" width="10" height="12"><path d="M7 1 L2 6 L7 11 Z" fill="#444"/></svg>
<svg class="a" style="left:1512px;top:870px" width="10" height="12"><path d="M3 1 L8 6 L3 11 Z" fill="#444"/></svg>
<div class="a" style="left:1486px;top:867px;width:19px;height:19px;border:1px solid #959595;border-radius:2px;background:linear-gradient(#f4f4f4,#e8e8e8 50%,#d4d4d4 51%,#cfcfcf)"></div>
<div class="a" style="left:1490px;top:871px;width:1px;height:9px;background:#444"></div>
<div class="a" style="left:1494px;top:871px;width:1px;height:9px;background:#444"></div>
<div class="a" style="left:1498px;top:871px;width:1px;height:9px;background:#444"></div>
</body></html>
